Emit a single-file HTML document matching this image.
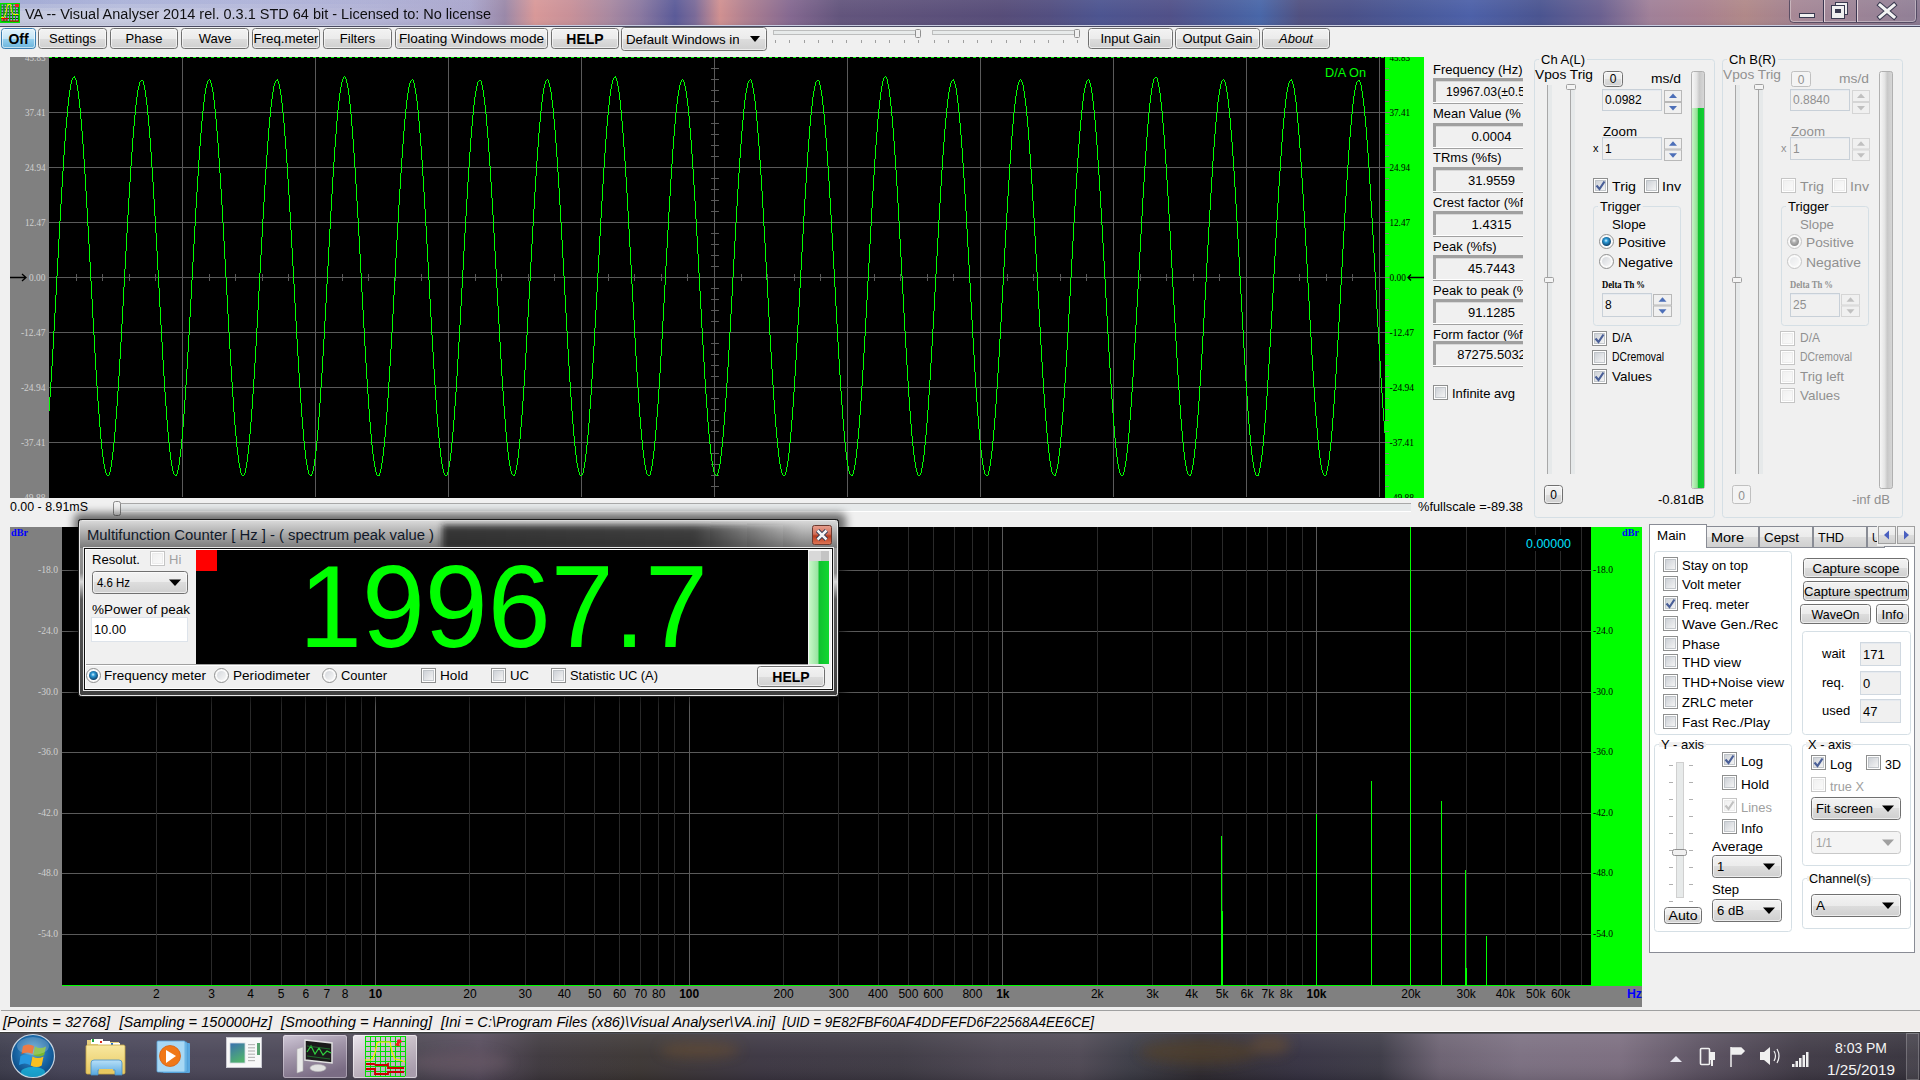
<!DOCTYPE html>
<html><head><meta charset="utf-8"><title>Visual Analyser</title>
<style>html,body{margin:0;padding:0;width:1920px;height:1080px;overflow:hidden;background:#f0f0f0;font-family:"Liberation Sans",sans-serif;}svg{display:block;}</style>
</head><body><svg width="1920" height="1080" viewBox="0 0 1920 1080" font-family="Liberation Sans, sans-serif"><defs>
<linearGradient id="gBtn" x1="0" y1="0" x2="0" y2="1">
 <stop offset="0" stop-color="#f3f3f3"/><stop offset="0.5" stop-color="#ebebeb"/>
 <stop offset="0.5" stop-color="#dddddd"/><stop offset="1" stop-color="#cfcfcf"/>
</linearGradient>
<linearGradient id="gBtnBlue" x1="0" y1="0" x2="0" y2="1">
 <stop offset="0" stop-color="#e5f4fc"/><stop offset="0.5" stop-color="#c4e5f6"/>
 <stop offset="0.5" stop-color="#98d1ef"/><stop offset="1" stop-color="#68b3db"/>
</linearGradient>
<linearGradient id="gChk" x1="0" y1="0" x2="1" y2="1">
 <stop offset="0" stop-color="#cbcfd5"/><stop offset="1" stop-color="#f6f6f6"/>
</linearGradient>
<linearGradient id="gChkD" x1="0" y1="0" x2="1" y2="1">
 <stop offset="0" stop-color="#f0f0f0"/><stop offset="1" stop-color="#fafafa"/>
</linearGradient>
<radialGradient id="gRadOn" cx="0.45" cy="0.4" r="0.6">
 <stop offset="0" stop-color="#d6f3ff"/><stop offset="0.35" stop-color="#2d9ad6"/><stop offset="1" stop-color="#0b3d66"/>
</radialGradient>
<radialGradient id="gRadOnD" cx="0.45" cy="0.4" r="0.6">
 <stop offset="0" stop-color="#f4f4f4"/><stop offset="0.4" stop-color="#b0b0b0"/><stop offset="1" stop-color="#8a8a8a"/>
</radialGradient>
<linearGradient id="gRad" x1="0" y1="0" x2="1" y2="1">
 <stop offset="0" stop-color="#cbcfd5"/><stop offset="1" stop-color="#f6f6f6"/>
</linearGradient>
<linearGradient id="gTrack" x1="0" y1="0" x2="1" y2="0">
 <stop offset="0" stop-color="#b9b9b9"/><stop offset="0.3" stop-color="#e7eaea"/><stop offset="1" stop-color="#e7eaea"/>
</linearGradient>

<linearGradient id="gTitle" x1="0" y1="0" x2="1920" y2="0" gradientUnits="userSpaceOnUse"><stop offset="0.0000" stop-color="#c4c8de"/><stop offset="0.0625" stop-color="#c8cce2"/><stop offset="0.1302" stop-color="#c0c2de"/><stop offset="0.1979" stop-color="#b4b4d6"/><stop offset="0.2448" stop-color="#aaa6cc"/><stop offset="0.2630" stop-color="#9a88a8"/><stop offset="0.2786" stop-color="#d89898"/><stop offset="0.2969" stop-color="#c89098"/><stop offset="0.3177" stop-color="#a888a0"/><stop offset="0.3333" stop-color="#8a78a0"/><stop offset="0.3516" stop-color="#5a5a98"/><stop offset="0.3620" stop-color="#7a6a98"/><stop offset="0.3750" stop-color="#d09090"/><stop offset="0.3880" stop-color="#b08090"/><stop offset="0.4115" stop-color="#846890"/><stop offset="0.4375" stop-color="#62547c"/><stop offset="0.5208" stop-color="#564c78"/><stop offset="0.5469" stop-color="#524e80"/><stop offset="0.5729" stop-color="#4c5490"/><stop offset="0.6094" stop-color="#505088"/><stop offset="0.6328" stop-color="#4a5a98"/><stop offset="0.6562" stop-color="#4866a8"/><stop offset="0.6771" stop-color="#505080"/><stop offset="0.7031" stop-color="#4a5088"/><stop offset="0.7344" stop-color="#485898"/><stop offset="0.7656" stop-color="#4c60a8"/><stop offset="0.8021" stop-color="#4a5490"/><stop offset="0.8333" stop-color="#6a6090"/><stop offset="0.8594" stop-color="#a08098"/><stop offset="0.8854" stop-color="#a88090"/><stop offset="0.9089" stop-color="#b08888"/><stop offset="0.9375" stop-color="#a08090"/><stop offset="1.0000" stop-color="#8a7890"/></linearGradient>
<linearGradient id="gTitleV" x1="0" y1="0" x2="0" y2="1">
 <stop offset="0" stop-color="#ffffff" stop-opacity="0.06"/><stop offset="0.6" stop-color="#ffffff" stop-opacity="0.0"/>
 <stop offset="1" stop-color="#000000" stop-opacity="0.08"/>
</linearGradient>
<linearGradient id="gTL" x1="0" y1="0" x2="1" y2="0"><stop offset="0" stop-color="#6070c0" stop-opacity="0.35"/><stop offset="0.6" stop-color="#6070c0" stop-opacity="0.15"/><stop offset="1" stop-color="#6070c0" stop-opacity="0"/></linearGradient><clipPath id="cCombo"><rect x="622" y="28" width="117" height="22"/></clipPath><linearGradient id="gMeterG" x1="0" y1="0" x2="1" y2="0"><stop offset="0" stop-color="#f8f8f8"/><stop offset="0.4" stop-color="#e4e4e4"/><stop offset="0.6" stop-color="#c8c8c8"/><stop offset="1" stop-color="#d8d8d8"/></linearGradient><linearGradient id="gMeter" x1="0" y1="0" x2="1" y2="0"><stop offset="0" stop-color="#c8f4c8"/><stop offset="0.45" stop-color="#90e090"/><stop offset="0.5" stop-color="#10c030"/><stop offset="1" stop-color="#10d030"/></linearGradient>
<linearGradient id="gDlgT" x1="0" y1="0" x2="0" y2="1">
 <stop offset="0" stop-color="#d8d8d8"/><stop offset="0.5" stop-color="#a8a8a8"/><stop offset="1" stop-color="#7a7a7a"/>
</linearGradient>
<linearGradient id="gDlgDark" x1="0" y1="0" x2="1" y2="0">
 <stop offset="0" stop-color="#000" stop-opacity="0"/><stop offset="0.47" stop-color="#000" stop-opacity="0"/>
 <stop offset="0.52" stop-color="#000" stop-opacity="0.75"/><stop offset="0.8" stop-color="#000" stop-opacity="0.6"/>
 <stop offset="0.92" stop-color="#000" stop-opacity="0.1"/><stop offset="1" stop-color="#000" stop-opacity="0"/>
</linearGradient>
<linearGradient id="gDlgSide" x1="0" y1="0" x2="0" y2="1">
 <stop offset="0" stop-color="#a0a0a0"/><stop offset="0.3" stop-color="#8a8a8a"/><stop offset="0.35" stop-color="#d8d8d8"/><stop offset="0.45" stop-color="#5a5a5a"/><stop offset="1" stop-color="#404040"/>
</linearGradient>
<linearGradient id="gDlgDark2" x1="0" y1="0" x2="1" y2="0"><stop offset="0" stop-color="#202020" stop-opacity="0.85"/><stop offset="0.7" stop-color="#202020" stop-opacity="0.8"/><stop offset="1" stop-color="#202020" stop-opacity="0"/></linearGradient>
<filter id="fShadow" x="-0.05" y="-0.2" width="1.1" height="1.4"><feGaussianBlur stdDeviation="4"/></filter>
<filter id="fBlur" x="-0.1" y="-0.5" width="1.2" height="2"><feGaussianBlur stdDeviation="3"/></filter>
<linearGradient id="gClose" x1="0" y1="0" x2="0" y2="1"><stop offset="0" stop-color="#e8a090"/><stop offset="0.45" stop-color="#d0705a"/><stop offset="0.55" stop-color="#b83a1c"/><stop offset="1" stop-color="#e07858"/></linearGradient><linearGradient id="gLvl" x1="0" y1="0" x2="1" y2="0"><stop offset="0" stop-color="#c8f8c8"/><stop offset="0.45" stop-color="#98e4a0"/><stop offset="0.5" stop-color="#10c030"/><stop offset="1" stop-color="#10d830"/></linearGradient><linearGradient id="gTab" x1="0" y1="0" x2="0" y2="1"><stop offset="0" stop-color="#f2f2f2"/><stop offset="0.5" stop-color="#ebebeb"/><stop offset="0.5" stop-color="#dddddd"/><stop offset="1" stop-color="#cfcfcf"/></linearGradient>
<linearGradient id="gTask" x1="0" y1="0" x2="1920" y2="0" gradientUnits="userSpaceOnUse"><stop offset="0.0000" stop-color="#3a3a4a"/><stop offset="0.0312" stop-color="#444256"/><stop offset="0.1042" stop-color="#4a4658"/><stop offset="0.1458" stop-color="#4a4656"/><stop offset="0.2188" stop-color="#4a4450"/><stop offset="0.2500" stop-color="#54495a"/><stop offset="0.2812" stop-color="#3c363c"/><stop offset="0.3333" stop-color="#3a3432"/><stop offset="0.3958" stop-color="#3a3440"/><stop offset="0.4688" stop-color="#3c3842"/><stop offset="0.5208" stop-color="#4a4450"/><stop offset="0.5625" stop-color="#4c4652"/><stop offset="0.5885" stop-color="#3a3a44"/><stop offset="0.6250" stop-color="#2e2a30"/><stop offset="0.6771" stop-color="#343040"/><stop offset="0.7188" stop-color="#3a3844"/><stop offset="0.7500" stop-color="#6a6070"/><stop offset="0.7917" stop-color="#7a6e80"/><stop offset="0.8438" stop-color="#7a6c7e"/><stop offset="0.8854" stop-color="#5a5060"/><stop offset="0.9375" stop-color="#3e3844"/><stop offset="1.0000" stop-color="#34303a"/></linearGradient>
<linearGradient id="gTaskV" x1="0" y1="0" x2="0" y2="1">
 <stop offset="0" stop-color="#ffffff" stop-opacity="0.10"/><stop offset="0.5" stop-color="#ffffff" stop-opacity="0.03"/><stop offset="1" stop-color="#000" stop-opacity="0.1"/>
</linearGradient>
<clipPath id="cTask"><rect x="0" y="1034" width="1920" height="46"/></clipPath>
<filter id="fBlur2" x="-0.5" y="-1" width="2" height="3"><feGaussianBlur stdDeviation="6"/></filter>
<radialGradient id="gOrb" cx="0.5" cy="0.4" r="0.6">
 <stop offset="0" stop-color="#60a8d0"/><stop offset="0.6" stop-color="#1a68a8"/><stop offset="1" stop-color="#0a4880"/>
</radialGradient>
<linearGradient id="gTBtn" x1="0" y1="0" x2="0" y2="1">
 <stop offset="0" stop-color="#ffffff" stop-opacity="0.35"/><stop offset="1" stop-color="#ffffff" stop-opacity="0.15"/>
</linearGradient>
<linearGradient id="gFold" x1="0" y1="0" x2="0" y2="1"><stop offset="0" stop-color="#f8e8a0"/><stop offset="1" stop-color="#e8c860"/></linearGradient><linearGradient id="gFoldB" x1="0" y1="0" x2="0" y2="1"><stop offset="0" stop-color="#b8e0f8"/><stop offset="1" stop-color="#58a8e0"/></linearGradient><linearGradient id="gWin" x1="0" y1="0" x2="0.4" y2="1"><stop offset="0" stop-color="#3a70b0"/><stop offset="1" stop-color="#50b070"/></linearGradient><linearGradient id="gTB1" x1="0" y1="0" x2="0.4" y2="1"><stop offset="0" stop-color="#d0c8d8"/><stop offset="0.5" stop-color="#a094a8"/><stop offset="1" stop-color="#7a6c84"/></linearGradient><linearGradient id="gTB2" x1="0" y1="0" x2="0.6" y2="1"><stop offset="0" stop-color="#ece6ee"/><stop offset="0.5" stop-color="#c8bec8"/><stop offset="1" stop-color="#a89cac"/></linearGradient></defs><rect x="0" y="0" width="1920" height="1080" fill="#f0f0f0" />
<rect x="10" y="57" width="39" height="441" fill="#808080" />
<rect x="49" y="57" width="1336" height="441" fill="#000000" />
<rect x="1385" y="57" width="39" height="441" fill="#00ff00" />
<rect x="182" y="57" width="1" height="440" fill="#5a5a5a"/>
<rect x="315" y="57" width="1" height="440" fill="#5a5a5a"/>
<rect x="448" y="57" width="1" height="440" fill="#5a5a5a"/>
<rect x="581" y="57" width="1" height="440" fill="#5a5a5a"/>
<rect x="714" y="57" width="1" height="440" fill="#5a5a5a"/>
<rect x="847" y="57" width="1" height="440" fill="#5a5a5a"/>
<rect x="980" y="57" width="1" height="440" fill="#5a5a5a"/>
<rect x="1113" y="57" width="1" height="440" fill="#5a5a5a"/>
<rect x="1246" y="57" width="1" height="440" fill="#5a5a5a"/>
<rect x="1379" y="57" width="1" height="440" fill="#5a5a5a"/>
<rect x="49" y="112" width="1336" height="1" fill="#5a5a5a"/>
<rect x="49" y="167" width="1336" height="1" fill="#5a5a5a"/>
<rect x="49" y="222" width="1336" height="1" fill="#5a5a5a"/>
<rect x="49" y="277" width="1336" height="1" fill="#5a5a5a"/>
<rect x="49" y="332" width="1336" height="1" fill="#5a5a5a"/>
<rect x="49" y="387" width="1336" height="1" fill="#5a5a5a"/>
<rect x="49" y="442" width="1336" height="1" fill="#5a5a5a"/>
<rect x="711" y="68" width="8" height="1" fill="#5a5a5a"/>
<rect x="711" y="79" width="8" height="1" fill="#5a5a5a"/>
<rect x="711" y="90" width="8" height="1" fill="#5a5a5a"/>
<rect x="711" y="101" width="8" height="1" fill="#5a5a5a"/>
<rect x="711" y="123" width="8" height="1" fill="#5a5a5a"/>
<rect x="711" y="134" width="8" height="1" fill="#5a5a5a"/>
<rect x="711" y="145" width="8" height="1" fill="#5a5a5a"/>
<rect x="711" y="156" width="8" height="1" fill="#5a5a5a"/>
<rect x="711" y="178" width="8" height="1" fill="#5a5a5a"/>
<rect x="711" y="189" width="8" height="1" fill="#5a5a5a"/>
<rect x="711" y="200" width="8" height="1" fill="#5a5a5a"/>
<rect x="711" y="211" width="8" height="1" fill="#5a5a5a"/>
<rect x="711" y="233" width="8" height="1" fill="#5a5a5a"/>
<rect x="711" y="244" width="8" height="1" fill="#5a5a5a"/>
<rect x="711" y="255" width="8" height="1" fill="#5a5a5a"/>
<rect x="711" y="266" width="8" height="1" fill="#5a5a5a"/>
<rect x="711" y="288" width="8" height="1" fill="#5a5a5a"/>
<rect x="711" y="299" width="8" height="1" fill="#5a5a5a"/>
<rect x="711" y="310" width="8" height="1" fill="#5a5a5a"/>
<rect x="711" y="321" width="8" height="1" fill="#5a5a5a"/>
<rect x="711" y="343" width="8" height="1" fill="#5a5a5a"/>
<rect x="711" y="354" width="8" height="1" fill="#5a5a5a"/>
<rect x="711" y="365" width="8" height="1" fill="#5a5a5a"/>
<rect x="711" y="376" width="8" height="1" fill="#5a5a5a"/>
<rect x="711" y="398" width="8" height="1" fill="#5a5a5a"/>
<rect x="711" y="409" width="8" height="1" fill="#5a5a5a"/>
<rect x="711" y="420" width="8" height="1" fill="#5a5a5a"/>
<rect x="711" y="431" width="8" height="1" fill="#5a5a5a"/>
<rect x="711" y="453" width="8" height="1" fill="#5a5a5a"/>
<rect x="711" y="464" width="8" height="1" fill="#5a5a5a"/>
<rect x="711" y="475" width="8" height="1" fill="#5a5a5a"/>
<rect x="711" y="486" width="8" height="1" fill="#5a5a5a"/>
<rect x="76" y="274" width="1" height="7" fill="#5a5a5a"/>
<rect x="102" y="274" width="1" height="7" fill="#5a5a5a"/>
<rect x="129" y="274" width="1" height="7" fill="#5a5a5a"/>
<rect x="155" y="274" width="1" height="7" fill="#5a5a5a"/>
<rect x="209" y="274" width="1" height="7" fill="#5a5a5a"/>
<rect x="235" y="274" width="1" height="7" fill="#5a5a5a"/>
<rect x="262" y="274" width="1" height="7" fill="#5a5a5a"/>
<rect x="288" y="274" width="1" height="7" fill="#5a5a5a"/>
<rect x="342" y="274" width="1" height="7" fill="#5a5a5a"/>
<rect x="368" y="274" width="1" height="7" fill="#5a5a5a"/>
<rect x="395" y="274" width="1" height="7" fill="#5a5a5a"/>
<rect x="421" y="274" width="1" height="7" fill="#5a5a5a"/>
<rect x="475" y="274" width="1" height="7" fill="#5a5a5a"/>
<rect x="501" y="274" width="1" height="7" fill="#5a5a5a"/>
<rect x="528" y="274" width="1" height="7" fill="#5a5a5a"/>
<rect x="554" y="274" width="1" height="7" fill="#5a5a5a"/>
<rect x="608" y="274" width="1" height="7" fill="#5a5a5a"/>
<rect x="634" y="274" width="1" height="7" fill="#5a5a5a"/>
<rect x="661" y="274" width="1" height="7" fill="#5a5a5a"/>
<rect x="687" y="274" width="1" height="7" fill="#5a5a5a"/>
<rect x="741" y="274" width="1" height="7" fill="#5a5a5a"/>
<rect x="767" y="274" width="1" height="7" fill="#5a5a5a"/>
<rect x="794" y="274" width="1" height="7" fill="#5a5a5a"/>
<rect x="820" y="274" width="1" height="7" fill="#5a5a5a"/>
<rect x="874" y="274" width="1" height="7" fill="#5a5a5a"/>
<rect x="900" y="274" width="1" height="7" fill="#5a5a5a"/>
<rect x="927" y="274" width="1" height="7" fill="#5a5a5a"/>
<rect x="953" y="274" width="1" height="7" fill="#5a5a5a"/>
<rect x="1007" y="274" width="1" height="7" fill="#5a5a5a"/>
<rect x="1033" y="274" width="1" height="7" fill="#5a5a5a"/>
<rect x="1060" y="274" width="1" height="7" fill="#5a5a5a"/>
<rect x="1086" y="274" width="1" height="7" fill="#5a5a5a"/>
<rect x="1140" y="274" width="1" height="7" fill="#5a5a5a"/>
<rect x="1166" y="274" width="1" height="7" fill="#5a5a5a"/>
<rect x="1193" y="274" width="1" height="7" fill="#5a5a5a"/>
<rect x="1219" y="274" width="1" height="7" fill="#5a5a5a"/>
<rect x="1273" y="274" width="1" height="7" fill="#5a5a5a"/>
<rect x="1299" y="274" width="1" height="7" fill="#5a5a5a"/>
<rect x="1326" y="274" width="1" height="7" fill="#5a5a5a"/>
<rect x="1352" y="274" width="1" height="7" fill="#5a5a5a"/>
<rect x="1385" y="68" width="4" height="1" fill="#808080"/>
<rect x="1385" y="79" width="4" height="1" fill="#808080"/>
<rect x="1385" y="90" width="4" height="1" fill="#808080"/>
<rect x="1385" y="101" width="4" height="1" fill="#808080"/>
<rect x="1385" y="112" width="5" height="1" fill="#808080"/>
<rect x="1385" y="123" width="4" height="1" fill="#808080"/>
<rect x="1385" y="134" width="4" height="1" fill="#808080"/>
<rect x="1385" y="145" width="4" height="1" fill="#808080"/>
<rect x="1385" y="156" width="4" height="1" fill="#808080"/>
<rect x="1385" y="167" width="5" height="1" fill="#808080"/>
<rect x="1385" y="178" width="4" height="1" fill="#808080"/>
<rect x="1385" y="189" width="4" height="1" fill="#808080"/>
<rect x="1385" y="200" width="4" height="1" fill="#808080"/>
<rect x="1385" y="211" width="4" height="1" fill="#808080"/>
<rect x="1385" y="222" width="5" height="1" fill="#808080"/>
<rect x="1385" y="233" width="4" height="1" fill="#808080"/>
<rect x="1385" y="244" width="4" height="1" fill="#808080"/>
<rect x="1385" y="255" width="4" height="1" fill="#808080"/>
<rect x="1385" y="266" width="4" height="1" fill="#808080"/>
<rect x="1385" y="277" width="5" height="1" fill="#808080"/>
<rect x="1385" y="288" width="4" height="1" fill="#808080"/>
<rect x="1385" y="299" width="4" height="1" fill="#808080"/>
<rect x="1385" y="310" width="4" height="1" fill="#808080"/>
<rect x="1385" y="321" width="4" height="1" fill="#808080"/>
<rect x="1385" y="332" width="5" height="1" fill="#808080"/>
<rect x="1385" y="343" width="4" height="1" fill="#808080"/>
<rect x="1385" y="354" width="4" height="1" fill="#808080"/>
<rect x="1385" y="365" width="4" height="1" fill="#808080"/>
<rect x="1385" y="376" width="4" height="1" fill="#808080"/>
<rect x="1385" y="387" width="5" height="1" fill="#808080"/>
<rect x="1385" y="398" width="4" height="1" fill="#808080"/>
<rect x="1385" y="409" width="4" height="1" fill="#808080"/>
<rect x="1385" y="420" width="4" height="1" fill="#808080"/>
<rect x="1385" y="431" width="4" height="1" fill="#808080"/>
<rect x="1385" y="442" width="5" height="1" fill="#808080"/>
<rect x="1385" y="453" width="4" height="1" fill="#808080"/>
<rect x="1385" y="464" width="4" height="1" fill="#808080"/>
<rect x="1385" y="475" width="4" height="1" fill="#808080"/>
<rect x="1385" y="486" width="4" height="1" fill="#808080"/>
<line x1="49" y1="57.5" x2="1385" y2="57.5" stroke="#00ff00" stroke-width="1" stroke-dasharray="3,3"/>
<path fill="#00ff00" d="M49,397h1v14h-1zM50,382h1v15h-1zM51,366h1v16h-1zM52,349h1v17h-1zM53,331h1v18h-1zM54,313h1v18h-1zM55,295h1v18h-1zM56,276h1v19h-1zM57,258h1v18h-1zM58,239h1v19h-1zM59,221h1v18h-1zM60,204h1v17h-1zM61,187h1v17h-1zM62,171h1v16h-1zM63,155h1v16h-1zM64,141h1v14h-1zM65,128h1v13h-1zM66,117h1v11h-1zM67,106h1v11h-1zM68,97h1v9h-1zM69,90h1v7h-1zM70,84h1v6h-1zM71,80h1v4h-1zM72,78h1v2h-1zM73,77h1v1h-1zM74,76h1v2h-1zM75,78h1v2h-1zM76,80h1v5h-1zM77,85h1v6h-1zM78,91h1v8h-1zM79,99h1v9h-1zM80,108h1v11h-1zM81,119h1v12h-1zM82,131h1v13h-1zM83,144h1v15h-1zM84,159h1v15h-1zM85,174h1v17h-1zM86,191h1v17h-1zM87,208h1v18h-1zM88,226h1v18h-1zM89,244h1v18h-1zM90,262h1v19h-1zM91,281h1v18h-1zM92,299h1v19h-1zM93,318h1v17h-1zM94,335h1v18h-1zM95,353h1v17h-1zM96,370h1v16h-1zM97,386h1v15h-1zM98,401h1v13h-1zM99,414h1v13h-1zM100,427h1v12h-1zM101,439h1v10h-1zM102,449h1v8h-1zM103,457h1v7h-1zM104,464h1v5h-1zM105,469h1v4h-1zM106,473h1v2h-1zM107,475h1v1h-1zM108,475h1v1h-1zM109,472h1v3h-1zM110,467h1v5h-1zM111,460h1v7h-1zM112,452h1v8h-1zM113,443h1v9h-1zM114,432h1v11h-1zM115,419h1v13h-1zM116,406h1v13h-1zM117,391h1v15h-1zM118,376h1v15h-1zM119,359h1v17h-1zM120,342h1v17h-1zM121,324h1v18h-1zM122,306h1v18h-1zM123,287h1v19h-1zM124,269h1v18h-1zM125,251h1v18h-1zM126,233h1v18h-1zM127,215h1v18h-1zM128,198h1v17h-1zM129,182h1v16h-1zM130,166h1v16h-1zM131,152h1v14h-1zM132,138h1v14h-1zM133,126h1v12h-1zM134,115h1v11h-1zM135,105h1v10h-1zM136,97h1v8h-1zM137,90h1v7h-1zM138,86h1v4h-1zM139,82h1v4h-1zM140,81h1v1h-1zM141,80h1v1h-1zM142,80h1v1h-1zM143,81h1v4h-1zM144,85h1v5h-1zM145,90h1v7h-1zM146,97h1v8h-1zM147,105h1v10h-1zM148,115h1v11h-1zM149,126h1v12h-1zM150,138h1v14h-1zM151,152h1v15h-1zM152,167h1v15h-1zM153,182h1v17h-1zM154,199h1v17h-1zM155,216h1v17h-1zM156,233h1v18h-1zM157,251h1v19h-1zM158,270h1v18h-1zM159,288h1v19h-1zM160,307h1v18h-1zM161,325h1v17h-1zM162,342h1v18h-1zM163,360h1v16h-1zM164,376h1v16h-1zM165,392h1v14h-1zM166,406h1v14h-1zM167,420h1v12h-1zM168,432h1v11h-1zM169,443h1v9h-1zM170,452h1v8h-1zM171,460h1v6h-1zM172,466h1v5h-1zM173,471h1v3h-1zM174,474h1v1h-1zM175,475h1v1h-1zM176,474h1v2h-1zM177,470h1v4h-1zM178,465h1v5h-1zM179,457h1v8h-1zM180,449h1v8h-1zM181,439h1v10h-1zM182,427h1v12h-1zM183,414h1v13h-1zM184,400h1v14h-1zM185,385h1v15h-1zM186,369h1v16h-1zM187,352h1v17h-1zM188,335h1v17h-1zM189,317h1v18h-1zM190,299h1v18h-1zM191,280h1v19h-1zM192,262h1v18h-1zM193,244h1v18h-1zM194,226h1v18h-1zM195,208h1v18h-1zM196,192h1v16h-1zM197,176h1v16h-1zM198,160h1v16h-1zM199,146h1v14h-1zM200,133h1v13h-1zM201,121h1v12h-1zM202,111h1v10h-1zM203,102h1v9h-1zM204,94h1v8h-1zM205,88h1v6h-1zM206,84h1v4h-1zM207,81h1v3h-1zM208,80h1v1h-1zM209,79h1v1h-1zM210,80h1v3h-1zM211,83h1v4h-1zM212,87h1v5h-1zM213,92h1v8h-1zM214,100h1v9h-1zM215,109h1v10h-1zM216,119h1v12h-1zM217,131h1v12h-1zM218,143h1v15h-1zM219,158h1v15h-1zM220,173h1v16h-1zM221,189h1v16h-1zM222,205h1v18h-1zM223,223h1v18h-1zM224,241h1v18h-1zM225,259h1v18h-1zM226,277h1v18h-1zM227,295h1v19h-1zM228,314h1v18h-1zM229,332h1v17h-1zM230,349h1v17h-1zM231,366h1v16h-1zM232,382h1v15h-1zM233,397h1v15h-1zM234,412h1v13h-1zM235,425h1v11h-1zM236,436h1v11h-1zM237,447h1v8h-1zM238,455h1v8h-1zM239,463h1v5h-1zM240,468h1v5h-1zM241,473h1v2h-1zM242,475h1v1h-1zM243,475h1v1h-1zM244,473h1v2h-1zM245,468h1v5h-1zM246,462h1v6h-1zM247,454h1v8h-1zM248,445h1v9h-1zM249,434h1v11h-1zM250,422h1v12h-1zM251,409h1v13h-1zM252,394h1v15h-1zM253,379h1v15h-1zM254,363h1v16h-1zM255,346h1v17h-1zM256,328h1v18h-1zM257,310h1v18h-1zM258,291h1v19h-1zM259,273h1v18h-1zM260,255h1v18h-1zM261,237h1v18h-1zM262,219h1v18h-1zM263,202h1v17h-1zM264,185h1v17h-1zM265,169h1v16h-1zM266,155h1v14h-1zM267,141h1v14h-1zM268,128h1v13h-1zM269,117h1v11h-1zM270,107h1v10h-1zM271,99h1v8h-1zM272,92h1v7h-1zM273,86h1v6h-1zM274,83h1v3h-1zM275,81h1v2h-1zM276,80h1v1h-1zM277,79h1v2h-1zM278,81h1v3h-1zM279,84h1v5h-1zM280,89h1v6h-1zM281,95h1v8h-1zM282,103h1v10h-1zM283,113h1v10h-1zM284,123h1v13h-1zM285,136h1v13h-1zM286,149h1v14h-1zM287,163h1v16h-1zM288,179h1v16h-1zM289,195h1v17h-1zM290,212h1v18h-1zM291,230h1v18h-1zM292,248h1v18h-1zM293,266h1v18h-1zM294,284h1v19h-1zM295,303h1v18h-1zM296,321h1v18h-1zM297,339h1v17h-1zM298,356h1v17h-1zM299,373h1v15h-1zM300,388h1v15h-1zM301,403h1v14h-1zM302,417h1v12h-1zM303,429h1v12h-1zM304,441h1v9h-1zM305,450h1v9h-1zM306,459h1v6h-1zM307,465h1v5h-1zM308,470h1v4h-1zM309,474h1v1h-1zM310,475h1v1h-1zM311,474h1v2h-1zM312,471h1v3h-1zM313,466h1v5h-1zM314,459h1v7h-1zM315,451h1v8h-1zM316,441h1v10h-1zM317,430h1v11h-1zM318,417h1v13h-1zM319,403h1v14h-1zM320,388h1v15h-1zM321,373h1v15h-1zM322,356h1v17h-1zM323,339h1v17h-1zM324,321h1v18h-1zM325,303h1v18h-1zM326,284h1v19h-1zM327,266h1v18h-1zM328,247h1v19h-1zM329,229h1v18h-1zM330,211h1v18h-1zM331,194h1v17h-1zM332,177h1v17h-1zM333,162h1v15h-1zM334,147h1v15h-1zM335,134h1v13h-1zM336,121h1v13h-1zM337,110h1v11h-1zM338,101h1v9h-1zM339,93h1v8h-1zM340,87h1v6h-1zM341,82h1v5h-1zM342,79h1v3h-1zM343,77h1v2h-1zM344,76h1v1h-1zM345,77h1v2h-1zM346,79h1v4h-1zM347,83h1v5h-1zM348,88h1v7h-1zM349,95h1v9h-1zM350,104h1v10h-1zM351,114h1v12h-1zM352,126h1v13h-1zM353,139h1v14h-1zM354,153h1v15h-1zM355,168h1v16h-1zM356,184h1v17h-1zM357,201h1v17h-1zM358,218h1v18h-1zM359,236h1v18h-1zM360,254h1v19h-1zM361,273h1v19h-1zM362,292h1v18h-1zM363,310h1v18h-1zM364,328h1v18h-1zM365,346h1v17h-1zM366,363h1v16h-1zM367,379h1v15h-1zM368,394h1v15h-1zM369,409h1v13h-1zM370,422h1v12h-1zM371,434h1v11h-1zM372,445h1v9h-1zM373,454h1v7h-1zM374,461h1v6h-1zM375,467h1v5h-1zM376,472h1v3h-1zM377,475h1v1h-1zM378,475h1v1h-1zM379,473h1v3h-1zM380,469h1v4h-1zM381,463h1v6h-1zM382,456h1v7h-1zM383,447h1v9h-1zM384,437h1v10h-1zM385,425h1v12h-1zM386,412h1v13h-1zM387,398h1v14h-1zM388,382h1v16h-1zM389,366h1v16h-1zM390,349h1v17h-1zM391,332h1v17h-1zM392,314h1v18h-1zM393,295h1v19h-1zM394,277h1v18h-1zM395,258h1v19h-1zM396,240h1v18h-1zM397,223h1v17h-1zM398,205h1v18h-1zM399,189h1v16h-1zM400,173h1v16h-1zM401,158h1v15h-1zM402,144h1v14h-1zM403,131h1v13h-1zM404,119h1v12h-1zM405,109h1v10h-1zM406,100h1v9h-1zM407,93h1v7h-1zM408,87h1v6h-1zM409,83h1v4h-1zM410,81h1v2h-1zM411,80h1v1h-1zM412,79h1v1h-1zM413,80h1v3h-1zM414,83h1v5h-1zM415,88h1v6h-1zM416,94h1v7h-1zM417,101h1v9h-1zM418,110h1v11h-1zM419,121h1v12h-1zM420,133h1v13h-1zM421,146h1v14h-1zM422,160h1v16h-1zM423,176h1v16h-1zM424,192h1v17h-1zM425,209h1v17h-1zM426,226h1v18h-1zM427,244h1v18h-1zM428,262h1v18h-1zM429,280h1v19h-1zM430,299h1v18h-1zM431,317h1v18h-1zM432,335h1v17h-1zM433,352h1v17h-1zM434,369h1v16h-1zM435,385h1v15h-1zM436,400h1v14h-1zM437,414h1v13h-1zM438,427h1v11h-1zM439,438h1v10h-1zM440,448h1v9h-1zM441,457h1v7h-1zM442,464h1v5h-1zM443,469h1v4h-1zM444,473h1v2h-1zM445,475h1v1h-1zM446,475h1v1h-1zM447,472h1v3h-1zM448,467h1v5h-1zM449,461h1v6h-1zM450,453h1v8h-1zM451,443h1v10h-1zM452,432h1v11h-1zM453,420h1v12h-1zM454,406h1v14h-1zM455,392h1v14h-1zM456,376h1v16h-1zM457,359h1v17h-1zM458,342h1v17h-1zM459,325h1v17h-1zM460,306h1v19h-1zM461,288h1v18h-1zM462,270h1v18h-1zM463,251h1v19h-1zM464,233h1v18h-1zM465,216h1v17h-1zM466,199h1v17h-1zM467,182h1v17h-1zM468,167h1v15h-1zM469,152h1v15h-1zM470,138h1v14h-1zM471,126h1v12h-1zM472,115h1v11h-1zM473,105h1v10h-1zM474,97h1v8h-1zM475,91h1v6h-1zM476,86h1v5h-1zM477,82h1v4h-1zM478,81h1v1h-1zM479,80h1v1h-1zM480,80h1v1h-1zM481,81h1v4h-1zM482,85h1v5h-1zM483,90h1v7h-1zM484,97h1v8h-1zM485,105h1v9h-1zM486,114h1v12h-1zM487,126h1v12h-1zM488,138h1v14h-1zM489,152h1v14h-1zM490,166h1v16h-1zM491,182h1v16h-1zM492,198h1v17h-1zM493,215h1v18h-1zM494,233h1v18h-1zM495,251h1v18h-1zM496,269h1v19h-1zM497,288h1v18h-1zM498,306h1v18h-1zM499,324h1v18h-1zM500,342h1v17h-1zM501,359h1v17h-1zM502,376h1v15h-1zM503,391h1v15h-1zM504,406h1v13h-1zM505,419h1v13h-1zM506,432h1v10h-1zM507,442h1v10h-1zM508,452h1v8h-1zM509,460h1v6h-1zM510,466h1v5h-1zM511,471h1v3h-1zM512,474h1v1h-1zM513,475h1v1h-1zM514,474h1v2h-1zM515,470h1v4h-1zM516,465h1v5h-1zM517,458h1v7h-1zM518,449h1v9h-1zM519,439h1v10h-1zM520,427h1v12h-1zM521,415h1v12h-1zM522,401h1v14h-1zM523,386h1v15h-1zM524,370h1v16h-1zM525,353h1v17h-1zM526,335h1v18h-1zM527,317h1v18h-1zM528,299h1v18h-1zM529,281h1v18h-1zM530,262h1v19h-1zM531,244h1v18h-1zM532,226h1v18h-1zM533,209h1v17h-1zM534,192h1v17h-1zM535,176h1v16h-1zM536,161h1v15h-1zM537,147h1v14h-1zM538,133h1v14h-1zM539,122h1v11h-1zM540,111h1v11h-1zM541,102h1v9h-1zM542,94h1v8h-1zM543,88h1v6h-1zM544,84h1v4h-1zM545,81h1v3h-1zM546,80h1v1h-1zM547,79h1v1h-1zM548,80h1v3h-1zM549,83h1v4h-1zM550,87h1v5h-1zM551,92h1v8h-1zM552,100h1v8h-1zM553,108h1v11h-1zM554,119h1v11h-1zM555,130h1v13h-1zM556,143h1v14h-1zM557,157h1v15h-1zM558,172h1v16h-1zM559,188h1v17h-1zM560,205h1v17h-1zM561,222h1v18h-1zM562,240h1v18h-1zM563,258h1v18h-1zM564,276h1v19h-1zM565,295h1v18h-1zM566,313h1v18h-1zM567,331h1v18h-1zM568,349h1v17h-1zM569,366h1v16h-1zM570,382h1v15h-1zM571,397h1v14h-1zM572,411h1v13h-1zM573,424h1v12h-1zM574,436h1v10h-1zM575,446h1v9h-1zM576,455h1v8h-1zM577,463h1v5h-1zM578,468h1v4h-1zM579,472h1v3h-1zM580,475h1v1h-1zM581,475h1v1h-1zM582,473h1v2h-1zM583,468h1v5h-1zM584,462h1v6h-1zM585,454h1v8h-1zM586,445h1v9h-1zM587,435h1v10h-1zM588,423h1v12h-1zM589,409h1v14h-1zM590,395h1v14h-1zM591,379h1v16h-1zM592,363h1v16h-1zM593,346h1v17h-1zM594,328h1v18h-1zM595,310h1v18h-1zM596,292h1v18h-1zM597,273h1v19h-1zM598,255h1v18h-1zM599,236h1v19h-1zM600,218h1v18h-1zM601,201h1v17h-1zM602,184h1v17h-1zM603,168h1v16h-1zM604,153h1v15h-1zM605,139h1v14h-1zM606,126h1v13h-1zM607,115h1v11h-1zM608,105h1v10h-1zM609,96h1v9h-1zM610,89h1v7h-1zM611,84h1v5h-1zM612,80h1v4h-1zM613,78h1v2h-1zM614,77h1v1h-1zM615,76h1v2h-1zM616,78h1v3h-1zM617,81h1v5h-1zM618,86h1v6h-1zM619,92h1v8h-1zM620,100h1v10h-1zM621,110h1v11h-1zM622,121h1v12h-1zM623,133h1v14h-1zM624,147h1v14h-1zM625,161h1v16h-1zM626,177h1v16h-1zM627,193h1v18h-1zM628,211h1v18h-1zM629,229h1v18h-1zM630,247h1v18h-1zM631,265h1v19h-1zM632,284h1v18h-1zM633,302h1v18h-1zM634,320h1v18h-1zM635,338h1v18h-1zM636,356h1v16h-1zM637,372h1v16h-1zM638,388h1v15h-1zM639,403h1v14h-1zM640,417h1v12h-1zM641,429h1v11h-1zM642,440h1v10h-1zM643,450h1v8h-1zM644,458h1v7h-1zM645,465h1v5h-1zM646,470h1v4h-1zM647,474h1v1h-1zM648,475h1v1h-1zM649,475h1v1h-1zM650,471h1v4h-1zM651,466h1v5h-1zM652,459h1v7h-1zM653,451h1v8h-1zM654,441h1v10h-1zM655,430h1v11h-1zM656,417h1v13h-1zM657,404h1v13h-1zM658,389h1v15h-1zM659,373h1v16h-1zM660,356h1v17h-1zM661,339h1v17h-1zM662,321h1v18h-1zM663,303h1v18h-1zM664,285h1v18h-1zM665,266h1v19h-1zM666,248h1v18h-1zM667,230h1v18h-1zM668,212h1v18h-1zM669,196h1v16h-1zM670,179h1v17h-1zM671,164h1v15h-1zM672,149h1v15h-1zM673,136h1v13h-1zM674,124h1v12h-1zM675,113h1v11h-1zM676,104h1v9h-1zM677,96h1v8h-1zM678,90h1v6h-1zM679,85h1v5h-1zM680,82h1v3h-1zM681,80h1v2h-1zM682,79h1v1h-1zM683,80h1v2h-1zM684,82h1v4h-1zM685,86h1v5h-1zM686,91h1v7h-1zM687,98h1v8h-1zM688,106h1v10h-1zM689,116h1v12h-1zM690,128h1v12h-1zM691,140h1v14h-1zM692,154h1v15h-1zM693,169h1v16h-1zM694,185h1v16h-1zM695,201h1v18h-1zM696,219h1v17h-1zM697,236h1v18h-1zM698,254h1v19h-1zM699,273h1v18h-1zM700,291h1v18h-1zM701,309h1v19h-1zM702,328h1v17h-1zM703,345h1v17h-1zM704,362h1v17h-1zM705,379h1v15h-1zM706,394h1v14h-1zM707,408h1v14h-1zM708,422h1v12h-1zM709,434h1v10h-1zM710,444h1v10h-1zM711,454h1v7h-1zM712,461h1v6h-1zM713,467h1v5h-1zM714,472h1v2h-1zM715,474h1v1h-1zM716,475h1v1h-1zM717,473h1v3h-1zM718,469h1v4h-1zM719,464h1v5h-1zM720,456h1v8h-1zM721,447h1v9h-1zM722,437h1v10h-1zM723,425h1v12h-1zM724,412h1v13h-1zM725,398h1v14h-1zM726,383h1v15h-1zM727,367h1v16h-1zM728,350h1v17h-1zM729,332h1v18h-1zM730,314h1v18h-1zM731,296h1v18h-1zM732,277h1v19h-1zM733,259h1v18h-1zM734,241h1v18h-1zM735,223h1v18h-1zM736,206h1v17h-1zM737,189h1v17h-1zM738,173h1v16h-1zM739,158h1v15h-1zM740,144h1v14h-1zM741,131h1v13h-1zM742,120h1v11h-1zM743,109h1v11h-1zM744,100h1v9h-1zM745,93h1v7h-1zM746,88h1v5h-1zM747,83h1v5h-1zM748,81h1v2h-1zM749,80h1v1h-1zM750,79h1v1h-1zM751,80h1v3h-1zM752,83h1v5h-1zM753,88h1v6h-1zM754,94h1v7h-1zM755,101h1v9h-1zM756,110h1v11h-1zM757,121h1v12h-1zM758,133h1v13h-1zM759,146h1v14h-1zM760,160h1v15h-1zM761,175h1v16h-1zM762,191h1v17h-1zM763,208h1v18h-1zM764,226h1v17h-1zM765,243h1v19h-1zM766,262h1v18h-1zM767,280h1v18h-1zM768,298h1v19h-1zM769,317h1v18h-1zM770,335h1v17h-1zM771,352h1v17h-1zM772,369h1v16h-1zM773,385h1v15h-1zM774,400h1v14h-1zM775,414h1v13h-1zM776,427h1v11h-1zM777,438h1v10h-1zM778,448h1v9h-1zM779,457h1v7h-1zM780,464h1v5h-1zM781,469h1v4h-1zM782,473h1v2h-1zM783,475h1v1h-1zM784,475h1v1h-1zM785,472h1v3h-1zM786,467h1v5h-1zM787,461h1v6h-1zM788,453h1v8h-1zM789,443h1v10h-1zM790,432h1v11h-1zM791,420h1v12h-1zM792,407h1v13h-1zM793,392h1v15h-1zM794,376h1v16h-1zM795,360h1v16h-1zM796,343h1v17h-1zM797,325h1v18h-1zM798,307h1v18h-1zM799,288h1v19h-1zM800,270h1v18h-1zM801,252h1v18h-1zM802,234h1v18h-1zM803,216h1v18h-1zM804,199h1v17h-1zM805,183h1v16h-1zM806,167h1v16h-1zM807,152h1v15h-1zM808,139h1v13h-1zM809,126h1v13h-1zM810,115h1v11h-1zM811,106h1v9h-1zM812,97h1v9h-1zM813,91h1v6h-1zM814,86h1v5h-1zM815,82h1v4h-1zM816,81h1v1h-1zM817,80h1v1h-1zM818,80h1v1h-1zM819,81h1v4h-1zM820,85h1v5h-1zM821,90h1v6h-1zM822,96h1v9h-1zM823,105h1v9h-1zM824,114h1v11h-1zM825,125h1v13h-1zM826,138h1v13h-1zM827,151h1v15h-1zM828,166h1v15h-1zM829,181h1v17h-1zM830,198h1v17h-1zM831,215h1v18h-1zM832,233h1v18h-1zM833,251h1v18h-1zM834,269h1v18h-1zM835,287h1v19h-1zM836,306h1v18h-1zM837,324h1v18h-1zM838,342h1v17h-1zM839,359h1v16h-1zM840,375h1v16h-1zM841,391h1v14h-1zM842,405h1v14h-1zM843,419h1v12h-1zM844,431h1v11h-1zM845,442h1v10h-1zM846,452h1v8h-1zM847,460h1v6h-1zM848,466h1v5h-1zM849,471h1v3h-1zM850,474h1v1h-1zM851,475h1v1h-1zM852,474h1v2h-1zM853,470h1v4h-1zM854,465h1v5h-1zM855,458h1v7h-1zM856,449h1v9h-1zM857,439h1v10h-1zM858,428h1v11h-1zM859,415h1v13h-1zM860,401h1v14h-1zM861,386h1v15h-1zM862,370h1v16h-1zM863,353h1v17h-1zM864,336h1v17h-1zM865,318h1v18h-1zM866,300h1v18h-1zM867,281h1v19h-1zM868,263h1v18h-1zM869,244h1v19h-1zM870,226h1v18h-1zM871,208h1v18h-1zM872,191h1v17h-1zM873,175h1v16h-1zM874,159h1v16h-1zM875,145h1v14h-1zM876,132h1v13h-1zM877,119h1v13h-1zM878,109h1v10h-1zM879,100h1v9h-1zM880,92h1v8h-1zM881,86h1v6h-1zM882,81h1v5h-1zM883,78h1v3h-1zM884,77h1v1h-1zM885,76h1v1h-1zM886,77h1v2h-1zM887,79h1v5h-1zM888,84h1v5h-1zM889,89h1v8h-1zM890,97h1v9h-1zM891,106h1v10h-1zM892,116h1v12h-1zM893,128h1v13h-1zM894,141h1v14h-1zM895,155h1v15h-1zM896,170h1v16h-1zM897,186h1v17h-1zM898,203h1v18h-1zM899,221h1v18h-1zM900,239h1v18h-1zM901,257h1v19h-1zM902,276h1v18h-1zM903,294h1v19h-1zM904,313h1v18h-1zM905,331h1v17h-1zM906,348h1v17h-1zM907,365h1v16h-1zM908,381h1v16h-1zM909,397h1v14h-1zM910,411h1v13h-1zM911,424h1v12h-1zM912,436h1v10h-1zM913,446h1v9h-1zM914,455h1v7h-1zM915,462h1v6h-1zM916,468h1v4h-1zM917,472h1v3h-1zM918,475h1v1h-1zM919,475h1v1h-1zM920,473h1v2h-1zM921,468h1v5h-1zM922,462h1v6h-1zM923,455h1v7h-1zM924,445h1v10h-1zM925,435h1v10h-1zM926,423h1v12h-1zM927,410h1v13h-1zM928,395h1v15h-1zM929,380h1v15h-1zM930,363h1v17h-1zM931,346h1v17h-1zM932,329h1v17h-1zM933,311h1v18h-1zM934,292h1v19h-1zM935,274h1v18h-1zM936,256h1v18h-1zM937,238h1v18h-1zM938,220h1v18h-1zM939,203h1v17h-1zM940,186h1v17h-1zM941,170h1v16h-1zM942,155h1v15h-1zM943,142h1v13h-1zM944,129h1v13h-1zM945,118h1v11h-1zM946,108h1v10h-1zM947,99h1v9h-1zM948,92h1v7h-1zM949,87h1v5h-1zM950,83h1v4h-1zM951,81h1v2h-1zM952,80h1v1h-1zM953,79h1v2h-1zM954,81h1v3h-1zM955,84h1v4h-1zM956,88h1v7h-1zM957,95h1v8h-1zM958,103h1v9h-1zM959,112h1v11h-1zM960,123h1v12h-1zM961,135h1v13h-1zM962,148h1v15h-1zM963,163h1v15h-1zM964,178h1v16h-1zM965,194h1v17h-1zM966,211h1v18h-1zM967,229h1v18h-1zM968,247h1v18h-1zM969,265h1v18h-1zM970,283h1v19h-1zM971,302h1v18h-1zM972,320h1v18h-1zM973,338h1v17h-1zM974,355h1v17h-1zM975,372h1v16h-1zM976,388h1v14h-1zM977,402h1v14h-1zM978,416h1v13h-1zM979,429h1v11h-1zM980,440h1v10h-1zM981,450h1v8h-1zM982,458h1v7h-1zM983,465h1v5h-1zM984,470h1v4h-1zM985,474h1v1h-1zM986,475h1v1h-1zM987,475h1v1h-1zM988,471h1v4h-1zM989,466h1v5h-1zM990,459h1v7h-1zM991,451h1v8h-1zM992,441h1v10h-1zM993,430h1v11h-1zM994,418h1v12h-1zM995,404h1v14h-1zM996,389h1v15h-1zM997,373h1v16h-1zM998,357h1v16h-1zM999,339h1v18h-1zM1000,322h1v17h-1zM1001,303h1v19h-1zM1002,285h1v18h-1zM1003,267h1v18h-1zM1004,248h1v19h-1zM1005,230h1v18h-1zM1006,213h1v17h-1zM1007,196h1v17h-1zM1008,180h1v16h-1zM1009,164h1v16h-1zM1010,150h1v14h-1zM1011,136h1v14h-1zM1012,124h1v12h-1zM1013,113h1v11h-1zM1014,104h1v9h-1zM1015,96h1v8h-1zM1016,90h1v6h-1zM1017,85h1v5h-1zM1018,82h1v3h-1zM1019,80h1v2h-1zM1020,79h1v1h-1zM1021,80h1v2h-1zM1022,82h1v3h-1zM1023,85h1v6h-1zM1024,91h1v7h-1zM1025,98h1v8h-1zM1026,106h1v10h-1zM1027,116h1v11h-1zM1028,127h1v13h-1zM1029,140h1v14h-1zM1030,154h1v15h-1zM1031,169h1v15h-1zM1032,184h1v17h-1zM1033,201h1v17h-1zM1034,218h1v18h-1zM1035,236h1v18h-1zM1036,254h1v18h-1zM1037,272h1v19h-1zM1038,291h1v18h-1zM1039,309h1v18h-1zM1040,327h1v18h-1zM1041,345h1v17h-1zM1042,362h1v16h-1zM1043,378h1v16h-1zM1044,394h1v14h-1zM1045,408h1v13h-1zM1046,421h1v12h-1zM1047,433h1v11h-1zM1048,444h1v9h-1zM1049,453h1v8h-1zM1050,461h1v6h-1zM1051,467h1v5h-1zM1052,472h1v2h-1zM1053,474h1v1h-1zM1054,475h1v1h-1zM1055,473h1v3h-1zM1056,469h1v4h-1zM1057,464h1v5h-1zM1058,456h1v8h-1zM1059,448h1v8h-1zM1060,437h1v11h-1zM1061,425h1v12h-1zM1062,412h1v13h-1zM1063,398h1v14h-1zM1064,383h1v15h-1zM1065,367h1v16h-1zM1066,350h1v17h-1zM1067,332h1v18h-1zM1068,314h1v18h-1zM1069,296h1v18h-1zM1070,278h1v18h-1zM1071,259h1v19h-1zM1072,241h1v18h-1zM1073,223h1v18h-1zM1074,206h1v17h-1zM1075,189h1v17h-1zM1076,173h1v16h-1zM1077,158h1v15h-1zM1078,144h1v14h-1zM1079,131h1v13h-1zM1080,120h1v11h-1zM1081,110h1v10h-1zM1082,101h1v9h-1zM1083,93h1v8h-1zM1084,88h1v5h-1zM1085,84h1v4h-1zM1086,81h1v3h-1zM1087,80h1v1h-1zM1088,79h1v1h-1zM1089,80h1v3h-1zM1090,83h1v4h-1zM1091,87h1v6h-1zM1092,93h1v8h-1zM1093,101h1v9h-1zM1094,110h1v10h-1zM1095,120h1v12h-1zM1096,132h1v13h-1zM1097,145h1v15h-1zM1098,160h1v15h-1zM1099,175h1v16h-1zM1100,191h1v17h-1zM1101,208h1v17h-1zM1102,225h1v18h-1zM1103,243h1v18h-1zM1104,261h1v18h-1zM1105,279h1v19h-1zM1106,298h1v18h-1zM1107,316h1v18h-1zM1108,334h1v18h-1zM1109,352h1v16h-1zM1110,368h1v16h-1zM1111,384h1v15h-1zM1112,399h1v14h-1zM1113,413h1v13h-1zM1114,426h1v12h-1zM1115,438h1v10h-1zM1116,448h1v9h-1zM1117,457h1v7h-1zM1118,464h1v5h-1zM1119,469h1v4h-1zM1120,473h1v2h-1zM1121,475h1v1h-1zM1122,475h1v1h-1zM1123,472h1v3h-1zM1124,467h1v5h-1zM1125,461h1v6h-1zM1126,453h1v8h-1zM1127,444h1v9h-1zM1128,433h1v11h-1zM1129,420h1v13h-1zM1130,407h1v13h-1zM1131,392h1v15h-1zM1132,377h1v15h-1zM1133,360h1v17h-1zM1134,343h1v17h-1zM1135,325h1v18h-1zM1136,307h1v18h-1zM1137,289h1v18h-1zM1138,270h1v19h-1zM1139,252h1v18h-1zM1140,234h1v18h-1zM1141,216h1v18h-1zM1142,198h1v18h-1zM1143,182h1v16h-1zM1144,166h1v16h-1zM1145,151h1v15h-1zM1146,137h1v14h-1zM1147,124h1v13h-1zM1148,113h1v11h-1zM1149,103h1v10h-1zM1150,95h1v8h-1zM1151,88h1v7h-1zM1152,83h1v5h-1zM1153,79h1v4h-1zM1154,78h1v1h-1zM1155,77h1v1h-1zM1156,77h1v1h-1zM1157,78h1v4h-1zM1158,82h1v5h-1zM1159,87h1v6h-1zM1160,93h1v9h-1zM1161,102h1v9h-1zM1162,111h1v12h-1zM1163,123h1v12h-1zM1164,135h1v14h-1zM1165,149h1v15h-1zM1166,164h1v16h-1zM1167,180h1v16h-1zM1168,196h1v18h-1zM1169,214h1v17h-1zM1170,231h1v19h-1zM1171,250h1v18h-1zM1172,268h1v19h-1zM1173,287h1v18h-1zM1174,305h1v18h-1zM1175,323h1v18h-1zM1176,341h1v17h-1zM1177,358h1v17h-1zM1178,375h1v15h-1zM1179,390h1v15h-1zM1180,405h1v14h-1zM1181,419h1v12h-1zM1182,431h1v11h-1zM1183,442h1v10h-1zM1184,452h1v8h-1zM1185,460h1v6h-1zM1186,466h1v5h-1zM1187,471h1v3h-1zM1188,474h1v1h-1zM1189,475h1v1h-1zM1190,474h1v2h-1zM1191,470h1v4h-1zM1192,465h1v5h-1zM1193,458h1v7h-1zM1194,449h1v9h-1zM1195,439h1v10h-1zM1196,428h1v11h-1zM1197,415h1v13h-1zM1198,401h1v14h-1zM1199,386h1v15h-1zM1200,370h1v16h-1zM1201,354h1v16h-1zM1202,336h1v18h-1zM1203,318h1v18h-1zM1204,300h1v18h-1zM1205,282h1v18h-1zM1206,263h1v19h-1zM1207,245h1v18h-1zM1208,227h1v18h-1zM1209,210h1v17h-1zM1210,193h1v17h-1zM1211,177h1v16h-1zM1212,161h1v16h-1zM1213,147h1v14h-1zM1214,134h1v13h-1zM1215,122h1v12h-1zM1216,112h1v10h-1zM1217,102h1v10h-1zM1218,95h1v7h-1zM1219,89h1v6h-1zM1220,84h1v5h-1zM1221,81h1v3h-1zM1222,80h1v1h-1zM1223,79h1v1h-1zM1224,80h1v2h-1zM1225,82h1v4h-1zM1226,86h1v6h-1zM1227,92h1v7h-1zM1228,99h1v9h-1zM1229,108h1v10h-1zM1230,118h1v12h-1zM1231,130h1v12h-1zM1232,142h1v14h-1zM1233,156h1v15h-1zM1234,171h1v16h-1zM1235,187h1v17h-1zM1236,204h1v17h-1zM1237,221h1v18h-1zM1238,239h1v18h-1zM1239,257h1v19h-1zM1240,276h1v18h-1zM1241,294h1v18h-1zM1242,312h1v18h-1zM1243,330h1v18h-1zM1244,348h1v17h-1zM1245,365h1v16h-1zM1246,381h1v15h-1zM1247,396h1v15h-1zM1248,411h1v13h-1zM1249,424h1v11h-1zM1250,435h1v11h-1zM1251,446h1v9h-1zM1252,455h1v7h-1zM1253,462h1v6h-1zM1254,468h1v4h-1zM1255,472h1v3h-1zM1256,475h1v1h-1zM1257,475h1v1h-1zM1258,473h1v3h-1zM1259,468h1v5h-1zM1260,462h1v6h-1zM1261,455h1v7h-1zM1262,446h1v9h-1zM1263,435h1v11h-1zM1264,423h1v12h-1zM1265,410h1v13h-1zM1266,396h1v14h-1zM1267,380h1v16h-1zM1268,364h1v16h-1zM1269,347h1v17h-1zM1270,329h1v18h-1zM1271,311h1v18h-1zM1272,293h1v18h-1zM1273,274h1v19h-1zM1274,256h1v18h-1zM1275,238h1v18h-1zM1276,220h1v18h-1zM1277,203h1v17h-1zM1278,186h1v17h-1zM1279,171h1v15h-1zM1280,156h1v15h-1zM1281,142h1v14h-1zM1282,129h1v13h-1zM1283,118h1v11h-1zM1284,108h1v10h-1zM1285,99h1v9h-1zM1286,92h1v7h-1zM1287,87h1v5h-1zM1288,83h1v4h-1zM1289,81h1v2h-1zM1290,80h1v1h-1zM1291,79h1v2h-1zM1292,81h1v3h-1zM1293,84h1v4h-1zM1294,88h1v7h-1zM1295,95h1v7h-1zM1296,102h1v10h-1zM1297,112h1v11h-1zM1298,123h1v12h-1zM1299,135h1v13h-1zM1300,148h1v14h-1zM1301,162h1v16h-1zM1302,178h1v16h-1zM1303,194h1v17h-1zM1304,211h1v17h-1zM1305,228h1v18h-1zM1306,246h1v18h-1zM1307,264h1v19h-1zM1308,283h1v18h-1zM1309,301h1v19h-1zM1310,320h1v17h-1zM1311,337h1v18h-1zM1312,355h1v16h-1zM1313,371h1v16h-1zM1314,387h1v15h-1zM1315,402h1v14h-1zM1316,416h1v12h-1zM1317,428h1v12h-1zM1318,440h1v10h-1zM1319,450h1v8h-1zM1320,458h1v7h-1zM1321,465h1v5h-1zM1322,470h1v3h-1zM1323,473h1v2h-1zM1324,475h1v1h-1zM1325,475h1v1h-1zM1326,471h1v4h-1zM1327,466h1v5h-1zM1328,460h1v6h-1zM1329,451h1v9h-1zM1330,442h1v9h-1zM1331,431h1v11h-1zM1332,418h1v13h-1zM1333,404h1v14h-1zM1334,390h1v14h-1zM1335,374h1v16h-1zM1336,357h1v17h-1zM1337,340h1v17h-1zM1338,322h1v18h-1zM1339,304h1v18h-1zM1340,285h1v19h-1zM1341,267h1v18h-1zM1342,249h1v18h-1zM1343,231h1v18h-1zM1344,213h1v18h-1zM1345,196h1v17h-1zM1346,180h1v16h-1zM1347,165h1v15h-1zM1348,150h1v15h-1zM1349,137h1v13h-1zM1350,125h1v12h-1zM1351,114h1v11h-1zM1352,104h1v10h-1zM1353,96h1v8h-1zM1354,90h1v6h-1zM1355,85h1v5h-1zM1356,82h1v3h-1zM1357,81h1v1h-1zM1358,80h1v1h-1zM1359,80h1v2h-1zM1360,82h1v3h-1zM1361,85h1v6h-1zM1362,91h1v7h-1zM1363,98h1v8h-1zM1364,106h1v10h-1zM1365,116h1v11h-1zM1366,127h1v13h-1zM1367,140h1v13h-1zM1368,153h1v15h-1zM1369,168h1v16h-1zM1370,184h1v17h-1zM1371,201h1v17h-1zM1372,218h1v17h-1zM1373,235h1v18h-1zM1374,253h1v19h-1zM1375,272h1v18h-1zM1376,290h1v19h-1zM1377,309h1v18h-1zM1378,327h1v17h-1zM1379,344h1v17h-1zM1380,361h1v17h-1zM1381,378h1v15h-1zM1382,393h1v15h-1zM1383,408h1v13h-1zM1384,421h1v12h-1z"/>
<text x="45.5" y="61" font-size="10.5" fill="#d0d0d0" font-family="Liberation Serif" text-anchor="end" textLength="20.5" lengthAdjust="spacingAndGlyphs" >45.83</text>
<text x="45.5" y="116" font-size="10.5" fill="#d0d0d0" font-family="Liberation Serif" text-anchor="end" textLength="20.5" lengthAdjust="spacingAndGlyphs" >37.41</text>
<text x="45.5" y="171" font-size="10.5" fill="#d0d0d0" font-family="Liberation Serif" text-anchor="end" textLength="20.5" lengthAdjust="spacingAndGlyphs" >24.94</text>
<text x="45.5" y="226" font-size="10.5" fill="#d0d0d0" font-family="Liberation Serif" text-anchor="end" textLength="20.5" lengthAdjust="spacingAndGlyphs" >12.47</text>
<text x="45.5" y="281" font-size="10.5" fill="#d0d0d0" font-family="Liberation Serif" text-anchor="end" textLength="16.4" lengthAdjust="spacingAndGlyphs" >0.00</text>
<text x="45.5" y="336" font-size="10.5" fill="#d0d0d0" font-family="Liberation Serif" text-anchor="end" textLength="24.599999999999998" lengthAdjust="spacingAndGlyphs" >-12.47</text>
<text x="45.5" y="391" font-size="10.5" fill="#d0d0d0" font-family="Liberation Serif" text-anchor="end" textLength="24.599999999999998" lengthAdjust="spacingAndGlyphs" >-24.94</text>
<text x="45.5" y="446" font-size="10.5" fill="#d0d0d0" font-family="Liberation Serif" text-anchor="end" textLength="24.599999999999998" lengthAdjust="spacingAndGlyphs" >-37.41</text>
<text x="45.5" y="501" font-size="10.5" fill="#d0d0d0" font-family="Liberation Serif" text-anchor="end" textLength="24.599999999999998" lengthAdjust="spacingAndGlyphs" >-49.88</text>
<text x="1389.5" y="61" font-size="10.5" fill="#000" font-family="Liberation Serif" textLength="20.5" lengthAdjust="spacingAndGlyphs" >45.83</text>
<text x="1389.5" y="116" font-size="10.5" fill="#000" font-family="Liberation Serif" textLength="20.5" lengthAdjust="spacingAndGlyphs" >37.41</text>
<text x="1389.5" y="171" font-size="10.5" fill="#000" font-family="Liberation Serif" textLength="20.5" lengthAdjust="spacingAndGlyphs" >24.94</text>
<text x="1389.5" y="226" font-size="10.5" fill="#000" font-family="Liberation Serif" textLength="20.5" lengthAdjust="spacingAndGlyphs" >12.47</text>
<text x="1389.5" y="281" font-size="10.5" fill="#000" font-family="Liberation Serif" textLength="16.4" lengthAdjust="spacingAndGlyphs" >0.00</text>
<text x="1389.5" y="336" font-size="10.5" fill="#000" font-family="Liberation Serif" textLength="24.599999999999998" lengthAdjust="spacingAndGlyphs" >-12.47</text>
<text x="1389.5" y="391" font-size="10.5" fill="#000" font-family="Liberation Serif" textLength="24.599999999999998" lengthAdjust="spacingAndGlyphs" >-24.94</text>
<text x="1389.5" y="446" font-size="10.5" fill="#000" font-family="Liberation Serif" textLength="24.599999999999998" lengthAdjust="spacingAndGlyphs" >-37.41</text>
<text x="1389.5" y="501" font-size="10.5" fill="#000" font-family="Liberation Serif" textLength="24.599999999999998" lengthAdjust="spacingAndGlyphs" >-49.88</text>
<rect x="0" y="50" width="1920" height="7" fill="#f0f0f0" />
<path d="M10,277.5 L26,277.5 M22,274 L26,277.5 L22,281" stroke="#000" stroke-width="1.3" fill="none"/>
<path d="M1424,277.5 L1408,277.5 M1411,274.5 L1408,277.5 L1411,280.5" stroke="#000" stroke-width="1.3" fill="none"/>
<text x="1325" y="77" font-size="13" fill="#00ff00" textLength="41" lengthAdjust="spacingAndGlyphs" >D/A On</text>
<rect x="0" y="498" width="1428" height="21" fill="#f0f0f0" />
<text x="10" y="511" font-size="13" fill="#000" textLength="78" lengthAdjust="spacingAndGlyphs" >0.00 - 8.91mS</text>
<rect x="113" y="503" width="1298" height="9" fill="#e6e9ea" />
<rect x="113" y="503" width="1298" height="1" fill="#a8a8a8"/>
<rect x="113" y="511" width="1298" height="1" fill="#ffffff"/>
<rect x="113" y="503" width="1" height="8" fill="#a8a8a8"/>
<rect x="113.5" y="501.5" width="7" height="14" rx="2" fill="#f2f2f2" stroke="#8a8a8a"/>
<text x="1418" y="511" font-size="13" fill="#000" textLength="105" lengthAdjust="spacingAndGlyphs" >%fullscale =-89.38</text>
<rect x="10" y="498" width="39" height="0" fill="#808080" />
<rect x="0" y="0" width="1920" height="27" fill="url(#gTitle)" />
<rect x="0" y="0" width="1920" height="27" fill="url(#gTitleV)" />
<rect x="0" y="0" width="500" height="4" fill="url(#gTL)" />
<rect x="0" y="4" width="500" height="4" fill="url(#gTL)" opacity="0.6"/>
<rect x="0" y="8" width="500" height="3" fill="url(#gTL)" opacity="0.25"/>
<rect x="0" y="25" width="1920" height="1" fill="#c8cce0"/>
<rect x="0" y="26" width="1920" height="1" fill="#4a4a62"/>
<rect x="0" y="3" width="20" height="20" fill="#00e400" />
<rect x="1.5" y="4.5" width="17" height="17" fill="#0a4a0a" />
<rect x="1.5" y="4.5" width="1.9" height="1.9" fill="#a898e0" />
<rect x="1.5" y="7.4" width="1.9" height="1.9" fill="#a898e0" />
<rect x="1.5" y="10.3" width="1.9" height="1.9" fill="#a898e0" />
<rect x="1.5" y="13.2" width="1.9" height="1.9" fill="#a898e0" />
<rect x="1.5" y="16.1" width="1.9" height="1.9" fill="#a898e0" />
<rect x="1.5" y="19.0" width="1.9" height="1.9" fill="#a898e0" />
<rect x="4.4" y="4.5" width="1.9" height="1.9" fill="#a898e0" />
<rect x="4.4" y="7.4" width="1.9" height="1.9" fill="#a898e0" />
<rect x="4.4" y="10.3" width="1.9" height="1.9" fill="#a898e0" />
<rect x="4.4" y="13.2" width="1.9" height="1.9" fill="#a898e0" />
<rect x="4.4" y="16.1" width="1.9" height="1.9" fill="#a898e0" />
<rect x="4.4" y="19.0" width="1.9" height="1.9" fill="#a898e0" />
<rect x="7.3" y="4.5" width="1.9" height="1.9" fill="#a898e0" />
<rect x="7.3" y="7.4" width="1.9" height="1.9" fill="#a898e0" />
<rect x="7.3" y="10.3" width="1.9" height="1.9" fill="#a898e0" />
<rect x="7.3" y="13.2" width="1.9" height="1.9" fill="#a898e0" />
<rect x="7.3" y="16.1" width="1.9" height="1.9" fill="#a898e0" />
<rect x="7.3" y="19.0" width="1.9" height="1.9" fill="#a898e0" />
<rect x="10.2" y="4.5" width="1.9" height="1.9" fill="#a898e0" />
<rect x="10.2" y="7.4" width="1.9" height="1.9" fill="#a898e0" />
<rect x="10.2" y="10.3" width="1.9" height="1.9" fill="#a898e0" />
<rect x="10.2" y="13.2" width="1.9" height="1.9" fill="#a898e0" />
<rect x="10.2" y="16.1" width="1.9" height="1.9" fill="#a898e0" />
<rect x="10.2" y="19.0" width="1.9" height="1.9" fill="#a898e0" />
<rect x="13.1" y="4.5" width="1.9" height="1.9" fill="#a898e0" />
<rect x="13.1" y="7.4" width="1.9" height="1.9" fill="#a898e0" />
<rect x="13.1" y="10.3" width="1.9" height="1.9" fill="#a898e0" />
<rect x="13.1" y="13.2" width="1.9" height="1.9" fill="#a898e0" />
<rect x="13.1" y="16.1" width="1.9" height="1.9" fill="#a898e0" />
<rect x="13.1" y="19.0" width="1.9" height="1.9" fill="#a898e0" />
<rect x="16.0" y="4.5" width="1.9" height="1.9" fill="#a898e0" />
<rect x="16.0" y="7.4" width="1.9" height="1.9" fill="#a898e0" />
<rect x="16.0" y="10.3" width="1.9" height="1.9" fill="#a898e0" />
<rect x="16.0" y="13.2" width="1.9" height="1.9" fill="#a898e0" />
<rect x="16.0" y="16.1" width="1.9" height="1.9" fill="#a898e0" />
<rect x="16.0" y="19.0" width="1.9" height="1.9" fill="#a898e0" />
<rect x="3.4000000000000004" y="4.5" width="1" height="17.0" fill="#00d000"/>
<rect x="6.3" y="4.5" width="1" height="17.0" fill="#00d000"/>
<rect x="9.2" y="4.5" width="1" height="17.0" fill="#00d000"/>
<rect x="12.1" y="4.5" width="1" height="17.0" fill="#00d000"/>
<rect x="15.0" y="4.5" width="1" height="17.0" fill="#00d000"/>
<path d="M1,17.5 l3,0 l2,-5 l1.5,-8 l3,0 l1,7 l2,3 l5,0" stroke="#f0f000" fill="none" stroke-width="1"/>
<path d="M1.5,20 l6,0 M10,21 l9,0 M1.5,18.5 l7,0" stroke="#e00000" fill="none" stroke-width="1.1"/>
<rect x="15" y="4" width="4" height="3" fill="#f02020" />
<text x="25" y="19" font-size="15.5" fill="#000" textLength="466" lengthAdjust="spacingAndGlyphs" opacity="0.92">VA -- Visual Analyser 2014 rel. 0.3.1 STD 64 bit - Licensed to: No license</text>
<rect x="1789.5" y="-3" width="127" height="25.5" rx="4" fill="#ffffff" fill-opacity="0.06" stroke="#3a3650" stroke-opacity="0.7"/>
<rect x="1790.5" y="-2" width="125" height="23.5" rx="3" fill="none" stroke="#ffffff" stroke-opacity="0.35"/>
<rect x="1823" y="0" width="1" height="22" fill="#3a3650"/>
<rect x="1824" y="0" width="1" height="22" fill="#e0d0d8"/>
<rect x="1856" y="0" width="1" height="22" fill="#3a3650"/>
<rect x="1857" y="0" width="1" height="22" fill="#e0d0d8"/>
<rect x="1799.5" y="13.5" width="15" height="4" fill="#f0f0f0" stroke="#3a3a50"/>
<rect x="1835.5" y="2.5" width="12" height="12" fill="#f0f0f0" stroke="#3a3a50"/>
<rect x="1831.5" y="5.5" width="13" height="13" fill="#f0f0f0" stroke="#3a3a50"/>
<rect x="1835.5" y="9.5" width="5" height="3" fill="#3a3a50" stroke="#3a3a50"/>
<path d="M1880,5 L1894,17 M1894,5 L1880,17" stroke="#3a3a50" stroke-width="5" stroke-linecap="square"/>
<path d="M1880,5 L1894,17 M1894,5 L1880,17" stroke="#f4f4f4" stroke-width="3" stroke-linecap="square"/>
<rect x="1.5" y="28.5" width="34" height="20" rx="3" fill="url(#gBtnBlue)" stroke="#3c7fb1"/>
<rect x="2.5" y="29.5" width="32" height="18" rx="2" fill="none" stroke="#ffffff" stroke-opacity="0.6"/>
<text x="18.5" y="43.54" font-size="14" fill="#000" font-weight="bold" text-anchor="middle" >Off</text>
<rect x="38.5" y="28.5" width="68" height="20" rx="3" fill="url(#gBtn)" stroke="#707070"/>
<rect x="39.5" y="29.5" width="66" height="18" rx="2" fill="none" stroke="#ffffff" stroke-opacity="0.6"/>
<text x="72.5" y="43.18" font-size="13" fill="#000" text-anchor="middle" >Settings</text>
<rect x="110.5" y="28.5" width="67" height="20" rx="3" fill="url(#gBtn)" stroke="#707070"/>
<rect x="111.5" y="29.5" width="65" height="18" rx="2" fill="none" stroke="#ffffff" stroke-opacity="0.6"/>
<text x="144.0" y="43.18" font-size="13" fill="#000" text-anchor="middle" >Phase</text>
<rect x="181.5" y="28.5" width="67" height="20" rx="3" fill="url(#gBtn)" stroke="#707070"/>
<rect x="182.5" y="29.5" width="65" height="18" rx="2" fill="none" stroke="#ffffff" stroke-opacity="0.6"/>
<text x="215.0" y="43.18" font-size="13" fill="#000" text-anchor="middle" >Wave</text>
<rect x="252.5" y="28.5" width="67" height="20" rx="3" fill="url(#gBtn)" stroke="#707070"/>
<rect x="253.5" y="29.5" width="65" height="18" rx="2" fill="none" stroke="#ffffff" stroke-opacity="0.6"/>
<text x="286.0" y="43.18" font-size="13" fill="#000" text-anchor="middle" textLength="65" lengthAdjust="spacingAndGlyphs" >Freq.meter</text>
<rect x="323.5" y="28.5" width="68" height="20" rx="3" fill="url(#gBtn)" stroke="#707070"/>
<rect x="324.5" y="29.5" width="66" height="18" rx="2" fill="none" stroke="#ffffff" stroke-opacity="0.6"/>
<text x="357.5" y="43.18" font-size="13" fill="#000" text-anchor="middle" >Filters</text>
<rect x="395.5" y="28.5" width="152" height="20" rx="3" fill="url(#gBtn)" stroke="#707070"/>
<rect x="396.5" y="29.5" width="150" height="18" rx="2" fill="none" stroke="#ffffff" stroke-opacity="0.6"/>
<text x="471.5" y="43.18" font-size="13" fill="#000" text-anchor="middle" textLength="145" lengthAdjust="spacingAndGlyphs" >Floating Windows mode</text>
<rect x="551.5" y="28.5" width="67" height="20" rx="3" fill="url(#gBtn)" stroke="#707070"/>
<rect x="552.5" y="29.5" width="65" height="18" rx="2" fill="none" stroke="#ffffff" stroke-opacity="0.6"/>
<text x="585.0" y="43.54" font-size="14" fill="#000" font-weight="bold" text-anchor="middle" >HELP</text>
<rect x="621.5" y="27.5" width="145" height="23" rx="3" fill="url(#gBtn)" stroke="#707070"/>
<rect x="622.5" y="28.5" width="143" height="21" rx="2" fill="none" stroke="#ffffff" stroke-opacity="0.6"/>
<text x="626" y="44" font-size="13" fill="#000" textLength="121" lengthAdjust="spacingAndGlyphs" clip-path="url(#cCombo)">Default Windows inp</text>
<path d="M750,36 L760,36 L755,42 Z" fill="#000"/>
<rect x="773.5" y="30.5" width="146" height="4" fill="#e7eaea" stroke="#b0b0b0" stroke-opacity="0.8"/>
<rect x="915.5" y="29.5" width="5" height="8" rx="1" fill="#f0f0f0" stroke="#909090"/>
<rect x="775" y="40" width="1" height="3" fill="#a0a0a0"/>
<rect x="789" y="40" width="1" height="3" fill="#a0a0a0"/>
<rect x="804" y="40" width="1" height="3" fill="#a0a0a0"/>
<rect x="818" y="40" width="1" height="3" fill="#a0a0a0"/>
<rect x="832" y="40" width="1" height="3" fill="#a0a0a0"/>
<rect x="846" y="40" width="1" height="3" fill="#a0a0a0"/>
<rect x="861" y="40" width="1" height="3" fill="#a0a0a0"/>
<rect x="875" y="40" width="1" height="3" fill="#a0a0a0"/>
<rect x="889" y="40" width="1" height="3" fill="#a0a0a0"/>
<rect x="904" y="40" width="1" height="3" fill="#a0a0a0"/>
<rect x="918" y="40" width="1" height="3" fill="#a0a0a0"/>
<rect x="932.5" y="30.5" width="146" height="4" fill="#e7eaea" stroke="#b0b0b0" stroke-opacity="0.8"/>
<rect x="1074.5" y="29.5" width="5" height="8" rx="1" fill="#f0f0f0" stroke="#909090"/>
<rect x="934" y="40" width="1" height="3" fill="#a0a0a0"/>
<rect x="948" y="40" width="1" height="3" fill="#a0a0a0"/>
<rect x="963" y="40" width="1" height="3" fill="#a0a0a0"/>
<rect x="977" y="40" width="1" height="3" fill="#a0a0a0"/>
<rect x="991" y="40" width="1" height="3" fill="#a0a0a0"/>
<rect x="1006" y="40" width="1" height="3" fill="#a0a0a0"/>
<rect x="1020" y="40" width="1" height="3" fill="#a0a0a0"/>
<rect x="1034" y="40" width="1" height="3" fill="#a0a0a0"/>
<rect x="1048" y="40" width="1" height="3" fill="#a0a0a0"/>
<rect x="1063" y="40" width="1" height="3" fill="#a0a0a0"/>
<rect x="1077" y="40" width="1" height="3" fill="#a0a0a0"/>
<rect x="1088.5" y="28.5" width="84" height="20" rx="3" fill="url(#gBtn)" stroke="#707070"/>
<rect x="1089.5" y="29.5" width="82" height="18" rx="2" fill="none" stroke="#ffffff" stroke-opacity="0.6"/>
<text x="1130.5" y="43.18" font-size="13" fill="#000" text-anchor="middle" >Input Gain</text>
<rect x="1175.5" y="28.5" width="84" height="20" rx="3" fill="url(#gBtn)" stroke="#707070"/>
<rect x="1176.5" y="29.5" width="82" height="18" rx="2" fill="none" stroke="#ffffff" stroke-opacity="0.6"/>
<text x="1217.5" y="43.18" font-size="13" fill="#000" text-anchor="middle" >Output Gain</text>
<rect x="1262.5" y="28.5" width="67" height="20" rx="3" fill="url(#gBtn)" stroke="#707070"/>
<rect x="1263.5" y="29.5" width="65" height="18" rx="2" fill="none" stroke="#ffffff" stroke-opacity="0.6"/>
<text x="1296.0" y="43.18" font-size="13" fill="#000" font-style="italic" text-anchor="middle" >About</text>
<text x="1433" y="74" font-size="13" fill="#000" >Frequency (Hz)</text>
<rect x="1433" y="78" width="90" height="26" fill="#f0f0f0" />
<rect x="1433" y="78" width="90" height="1" fill="#a0a0a0"/>
<rect x="1433" y="79" width="90" height="1" fill="#a0a0a0"/>
<rect x="1434" y="80" width="89" height="1" fill="#a0a0a0"/>
<rect x="1433" y="78" width="1" height="26" fill="#a0a0a0"/>
<rect x="1434" y="78" width="1" height="25" fill="#a0a0a0"/>
<rect x="1435" y="78" width="1" height="24" fill="#a0a0a0"/>
<rect x="1436" y="81" width="87" height="1" fill="#d8d8d8"/>
<rect x="1433" y="102" width="90" height="1" fill="#ffffff"/>
<rect x="1433" y="103" width="90" height="1" fill="#a0a0a0"/>
<text x="1446" y="96" font-size="13" fill="#000" textLength="79" lengthAdjust="spacingAndGlyphs" >19967.03(±0.5</text>
<text x="1433" y="118" font-size="13" fill="#000" >Mean Value (%</text>
<rect x="1433" y="123" width="90" height="26" fill="#f0f0f0" />
<rect x="1433" y="123" width="90" height="1" fill="#a0a0a0"/>
<rect x="1433" y="124" width="90" height="1" fill="#a0a0a0"/>
<rect x="1434" y="125" width="89" height="1" fill="#a0a0a0"/>
<rect x="1433" y="123" width="1" height="26" fill="#a0a0a0"/>
<rect x="1434" y="123" width="1" height="25" fill="#a0a0a0"/>
<rect x="1435" y="123" width="1" height="24" fill="#a0a0a0"/>
<rect x="1436" y="126" width="87" height="1" fill="#d8d8d8"/>
<rect x="1433" y="147" width="90" height="1" fill="#ffffff"/>
<rect x="1433" y="148" width="90" height="1" fill="#a0a0a0"/>
<text x="1491.5" y="141" font-size="13" fill="#000" text-anchor="middle" >0.0004</text>
<text x="1433" y="162" font-size="13" fill="#000" >TRms (%fs)</text>
<rect x="1433" y="167" width="90" height="26" fill="#f0f0f0" />
<rect x="1433" y="167" width="90" height="1" fill="#a0a0a0"/>
<rect x="1433" y="168" width="90" height="1" fill="#a0a0a0"/>
<rect x="1434" y="169" width="89" height="1" fill="#a0a0a0"/>
<rect x="1433" y="167" width="1" height="26" fill="#a0a0a0"/>
<rect x="1434" y="167" width="1" height="25" fill="#a0a0a0"/>
<rect x="1435" y="167" width="1" height="24" fill="#a0a0a0"/>
<rect x="1436" y="170" width="87" height="1" fill="#d8d8d8"/>
<rect x="1433" y="191" width="90" height="1" fill="#ffffff"/>
<rect x="1433" y="192" width="90" height="1" fill="#a0a0a0"/>
<text x="1491.5" y="185" font-size="13" fill="#000" text-anchor="middle" >31.9559</text>
<text x="1433" y="207" font-size="13" fill="#000" >Crest factor (%f</text>
<rect x="1433" y="211" width="90" height="26" fill="#f0f0f0" />
<rect x="1433" y="211" width="90" height="1" fill="#a0a0a0"/>
<rect x="1433" y="212" width="90" height="1" fill="#a0a0a0"/>
<rect x="1434" y="213" width="89" height="1" fill="#a0a0a0"/>
<rect x="1433" y="211" width="1" height="26" fill="#a0a0a0"/>
<rect x="1434" y="211" width="1" height="25" fill="#a0a0a0"/>
<rect x="1435" y="211" width="1" height="24" fill="#a0a0a0"/>
<rect x="1436" y="214" width="87" height="1" fill="#d8d8d8"/>
<rect x="1433" y="235" width="90" height="1" fill="#ffffff"/>
<rect x="1433" y="236" width="90" height="1" fill="#a0a0a0"/>
<text x="1491.5" y="229" font-size="13" fill="#000" text-anchor="middle" >1.4315</text>
<text x="1433" y="251" font-size="13" fill="#000" >Peak (%fs)</text>
<rect x="1433" y="255" width="90" height="26" fill="#f0f0f0" />
<rect x="1433" y="255" width="90" height="1" fill="#a0a0a0"/>
<rect x="1433" y="256" width="90" height="1" fill="#a0a0a0"/>
<rect x="1434" y="257" width="89" height="1" fill="#a0a0a0"/>
<rect x="1433" y="255" width="1" height="26" fill="#a0a0a0"/>
<rect x="1434" y="255" width="1" height="25" fill="#a0a0a0"/>
<rect x="1435" y="255" width="1" height="24" fill="#a0a0a0"/>
<rect x="1436" y="258" width="87" height="1" fill="#d8d8d8"/>
<rect x="1433" y="279" width="90" height="1" fill="#ffffff"/>
<rect x="1433" y="280" width="90" height="1" fill="#a0a0a0"/>
<text x="1491.5" y="273" font-size="13" fill="#000" text-anchor="middle" >45.7443</text>
<text x="1433" y="295" font-size="13" fill="#000" >Peak to peak (%</text>
<rect x="1433" y="299" width="90" height="26" fill="#f0f0f0" />
<rect x="1433" y="299" width="90" height="1" fill="#a0a0a0"/>
<rect x="1433" y="300" width="90" height="1" fill="#a0a0a0"/>
<rect x="1434" y="301" width="89" height="1" fill="#a0a0a0"/>
<rect x="1433" y="299" width="1" height="26" fill="#a0a0a0"/>
<rect x="1434" y="299" width="1" height="25" fill="#a0a0a0"/>
<rect x="1435" y="299" width="1" height="24" fill="#a0a0a0"/>
<rect x="1436" y="302" width="87" height="1" fill="#d8d8d8"/>
<rect x="1433" y="323" width="90" height="1" fill="#ffffff"/>
<rect x="1433" y="324" width="90" height="1" fill="#a0a0a0"/>
<text x="1491.5" y="317" font-size="13" fill="#000" text-anchor="middle" >91.1285</text>
<text x="1433" y="339" font-size="13" fill="#000" >Form factor (%f</text>
<rect x="1433" y="341" width="90" height="26" fill="#f0f0f0" />
<rect x="1433" y="341" width="90" height="1" fill="#a0a0a0"/>
<rect x="1433" y="342" width="90" height="1" fill="#a0a0a0"/>
<rect x="1434" y="343" width="89" height="1" fill="#a0a0a0"/>
<rect x="1433" y="341" width="1" height="26" fill="#a0a0a0"/>
<rect x="1434" y="341" width="1" height="25" fill="#a0a0a0"/>
<rect x="1435" y="341" width="1" height="24" fill="#a0a0a0"/>
<rect x="1436" y="344" width="87" height="1" fill="#d8d8d8"/>
<rect x="1433" y="365" width="90" height="1" fill="#ffffff"/>
<rect x="1433" y="366" width="90" height="1" fill="#a0a0a0"/>
<text x="1491.5" y="359" font-size="13" fill="#000" text-anchor="middle" >87275.5032</text>
<rect x="1523" y="55" width="8" height="400" fill="#f0f0f0" />
<rect x="1433.5" y="385.5" width="14" height="14" fill="#ffffff" stroke="#8e8f8f"/>
<rect x="1435.5" y="387.5" width="10" height="10" fill="url(#gChk)" stroke="#aeb3b9" stroke-opacity="0.7"/>
<text x="1452" y="398" font-size="13" fill="#000" textLength="63" lengthAdjust="spacingAndGlyphs" >Infinite avg</text>
<rect x="1534.5" y="59.5" width="180" height="458" rx="3" fill="none" stroke="#d5dfe5"/>
<rect x="1539" y="57" width="48.078125" height="5" fill="#f0f0f0"/>
<text x="1541" y="63.68" font-size="13" fill="#000" >Ch A(L)</text>
<text x="1535" y="79" font-size="13" fill="#000" textLength="58" lengthAdjust="spacingAndGlyphs" >Vpos Trig</text>
<rect x="1547" y="85" width="5" height="389" fill="#e6e9ea"/>
<rect x="1547" y="85" width="1" height="389" fill="#a8a8a8"/>
<rect x="1570" y="85" width="5" height="389" fill="#e6e9ea"/>
<rect x="1570" y="85" width="1" height="389" fill="#a8a8a8"/>
<rect x="1566.5" y="84.5" width="9" height="5" rx="1" fill="#f4f4f4" stroke="#a0a0a0"/>
<rect x="1544.5" y="277.5" width="9" height="5" rx="1" fill="#f4f4f4" stroke="#a0a0a0"/>
<rect x="1603.5" y="71.5" width="19" height="15" rx="3" fill="url(#gBtn)" stroke="#707070"/>
<rect x="1604.5" y="72.5" width="17" height="13" rx="2" fill="none" stroke="#ffffff" stroke-opacity="0.6"/>
<text x="1613.0" y="83.32" font-size="12" fill="#000" text-anchor="middle" >0</text>
<text x="1681" y="83" font-size="13" fill="#000" text-anchor="end" textLength="30" lengthAdjust="spacingAndGlyphs" >ms/d</text>
<rect x="1602.5" y="89.5" width="59" height="21" fill="#f0f0f0" stroke="#c8d0d8"/>
<rect x="1603" y="90" width="58" height="1" fill="#e3e9ef" opacity="0.8"/>
<text x="1605" y="104.32" font-size="12" fill="#000" >0.0982</text>
<rect x="1664.5" y="90.5" width="17" height="11.0" fill="#f0f0f0" stroke="#b8b8b8"/>
<path d="M1669.0,98.0 L1677.0,98.0 L1673.0,93.5 Z" fill="#4d6fb8"/>
<rect x="1664.5" y="102.5" width="17" height="11.0" fill="#f0f0f0" stroke="#b8b8b8"/>
<path d="M1669.0,106.0 L1677.0,106.0 L1673.0,110.5 Z" fill="#4d6fb8"/>
<text x="1603" y="136" font-size="13" fill="#000" textLength="34" lengthAdjust="spacingAndGlyphs" >Zoom</text>
<text x="1593" y="152" font-size="11" fill="#000" >x</text>
<rect x="1602.5" y="137.5" width="59" height="22" fill="#f0f0f0" stroke="#c8d0d8"/>
<rect x="1603" y="138" width="58" height="1" fill="#e3e9ef" opacity="0.8"/>
<text x="1605" y="152.82" font-size="12" fill="#000" >1</text>
<rect x="1664.5" y="138.5" width="17" height="10.5" fill="#f0f0f0" stroke="#b8b8b8"/>
<path d="M1669.0,145.75 L1677.0,145.75 L1673.0,141.25 Z" fill="#4d6fb8"/>
<rect x="1664.5" y="150.0" width="17" height="10.5" fill="#f0f0f0" stroke="#b8b8b8"/>
<path d="M1669.0,153.25 L1677.0,153.25 L1673.0,157.75 Z" fill="#4d6fb8"/>
<rect x="1593.5" y="178.5" width="14" height="14" fill="#ffffff" stroke="#8e8f8f"/>
<rect x="1595.5" y="180.5" width="10" height="10" fill="url(#gChk)" stroke="#aeb3b9" stroke-opacity="0.7"/>
<path d="M1596.5,185.5 L1599.5,189 L1604.5,181.5" fill="none" stroke="#4a5f97" stroke-width="2.2"/>
<text x="1612" y="191" font-size="13" fill="#000" textLength="24" lengthAdjust="spacingAndGlyphs" >Trig</text>
<rect x="1644.5" y="178.5" width="14" height="14" fill="#ffffff" stroke="#8e8f8f"/>
<rect x="1646.5" y="180.5" width="10" height="10" fill="url(#gChk)" stroke="#aeb3b9" stroke-opacity="0.7"/>
<text x="1662" y="191" font-size="13" fill="#000" textLength="19" lengthAdjust="spacingAndGlyphs" >Inv</text>
<rect x="1593.5" y="206.5" width="87" height="119" rx="3" fill="none" stroke="#d5dfe5"/>
<rect x="1598" y="204" width="44.703125" height="5" fill="#f0f0f0"/>
<text x="1600" y="210.68" font-size="13" fill="#000" >Trigger</text>
<text x="1612" y="229" font-size="13" fill="#000" textLength="34" lengthAdjust="spacingAndGlyphs" >Slope</text>
<circle cx="1606.5" cy="241.5" r="7.0" fill="#fafafa" stroke="#8e8f8f"/>
<circle cx="1606.5" cy="241.5" r="4.5" fill="url(#gRadOn)"/>
<text x="1618" y="247" font-size="13" fill="#000" textLength="48" lengthAdjust="spacingAndGlyphs" >Positive</text>
<circle cx="1606.5" cy="261.5" r="7.0" fill="#fafafa" stroke="#8e8f8f"/>
<circle cx="1606.5" cy="261.5" r="4.5" fill="url(#gRad)" opacity="0.8"/>
<text x="1618" y="267" font-size="13" fill="#000" textLength="55" lengthAdjust="spacingAndGlyphs" >Negative</text>
<text x="1602" y="288" font-size="10" fill="#000" font-family="Liberation Serif" font-weight="bold" textLength="43" lengthAdjust="spacingAndGlyphs" >Delta Th %</text>
<rect x="1602.5" y="293.5" width="49" height="23" fill="#f0f0f0" stroke="#c8d0d8"/>
<rect x="1603" y="294" width="48" height="1" fill="#e3e9ef" opacity="0.8"/>
<text x="1605" y="309.32" font-size="12" fill="#000" >8</text>
<rect x="1653.5" y="294.5" width="18" height="10.5" fill="#f0f0f0" stroke="#b8b8b8"/>
<path d="M1658.5,301.75 L1666.5,301.75 L1662.5,297.25 Z" fill="#4d6fb8"/>
<rect x="1653.5" y="306.0" width="18" height="10.5" fill="#f0f0f0" stroke="#b8b8b8"/>
<path d="M1658.5,309.25 L1666.5,309.25 L1662.5,313.75 Z" fill="#4d6fb8"/>
<rect x="1592.5" y="331.5" width="14" height="14" fill="#ffffff" stroke="#8e8f8f"/>
<rect x="1594.5" y="333.5" width="10" height="10" fill="url(#gChk)" stroke="#aeb3b9" stroke-opacity="0.7"/>
<path d="M1595.5,338.5 L1598.5,342 L1603.5,334.5" fill="none" stroke="#4a5f97" stroke-width="2.2"/>
<text x="1612" y="342" font-size="12" fill="#000" textLength="20" lengthAdjust="spacingAndGlyphs" >D/A</text>
<rect x="1592.5" y="350.5" width="14" height="14" fill="#ffffff" stroke="#8e8f8f"/>
<rect x="1594.5" y="352.5" width="10" height="10" fill="url(#gChk)" stroke="#aeb3b9" stroke-opacity="0.7"/>
<text x="1612" y="361" font-size="12" fill="#000" textLength="52" lengthAdjust="spacingAndGlyphs" >DCremoval</text>
<rect x="1592.5" y="369.5" width="14" height="14" fill="#ffffff" stroke="#8e8f8f"/>
<rect x="1594.5" y="371.5" width="10" height="10" fill="url(#gChk)" stroke="#aeb3b9" stroke-opacity="0.7"/>
<path d="M1595.5,376.5 L1598.5,380 L1603.5,372.5" fill="none" stroke="#4a5f97" stroke-width="2.2"/>
<text x="1612" y="380.5" font-size="13" fill="#000" textLength="40" lengthAdjust="spacingAndGlyphs" >Values</text>
<rect x="1691.5" y="71.5" width="13" height="417" rx="2" fill="url(#gMeterG)" stroke="#b0b0b0"/>
<rect x="1692" y="108" width="12" height="380" fill="url(#gMeter)"/>
<rect x="1544.5" y="485.5" width="18" height="18" rx="3" fill="url(#gBtn)" stroke="#707070"/>
<rect x="1545.5" y="486.5" width="16" height="16" rx="2" fill="none" stroke="#ffffff" stroke-opacity="0.6"/>
<text x="1553.5" y="498.82" font-size="12" fill="#000" text-anchor="middle" >0</text>
<text x="1704" y="504" font-size="13" fill="#000" text-anchor="end" textLength="46" lengthAdjust="spacingAndGlyphs" >-0.81dB</text>
<rect x="1722.5" y="59.5" width="180" height="458" rx="3" fill="none" stroke="#d5dfe5"/>
<rect x="1727" y="57" width="50.953125" height="5" fill="#f0f0f0"/>
<text x="1729" y="63.68" font-size="13" fill="#000" >Ch B(R)</text>
<text x="1723" y="79" font-size="13" fill="#909090" textLength="58" lengthAdjust="spacingAndGlyphs" >Vpos Trig</text>
<rect x="1735" y="85" width="5" height="389" fill="#e6e9ea"/>
<rect x="1735" y="85" width="1" height="389" fill="#a8a8a8"/>
<rect x="1758" y="85" width="5" height="389" fill="#e6e9ea"/>
<rect x="1758" y="85" width="1" height="389" fill="#a8a8a8"/>
<rect x="1754.5" y="84.5" width="9" height="5" rx="1" fill="#f4f4f4" stroke="#a0a0a0"/>
<rect x="1732.5" y="277.5" width="9" height="5" rx="1" fill="#f4f4f4" stroke="#a0a0a0"/>
<rect x="1791.5" y="71.5" width="19" height="15" rx="2" fill="#f4f4f4" stroke="#c0c0c0"/>
<text x="1801" y="84" font-size="12" fill="#909090" text-anchor="middle" >0</text>
<text x="1869" y="83" font-size="13" fill="#909090" text-anchor="end" textLength="30" lengthAdjust="spacingAndGlyphs" >ms/d</text>
<rect x="1790.5" y="89.5" width="59" height="21" fill="#f0f0f0" stroke="#c8d0d8"/>
<rect x="1791" y="90" width="58" height="1" fill="#e3e9ef" opacity="0.8"/>
<text x="1793" y="104.32" font-size="12" fill="#909090" >0.8840</text>
<rect x="1852.5" y="90.5" width="17" height="11.0" fill="#f0f0f0" stroke="#d5d5d5"/>
<path d="M1857.0,98.0 L1865.0,98.0 L1861.0,93.5 Z" fill="#c0c0c0"/>
<rect x="1852.5" y="102.5" width="17" height="11.0" fill="#f0f0f0" stroke="#d5d5d5"/>
<path d="M1857.0,106.0 L1865.0,106.0 L1861.0,110.5 Z" fill="#c0c0c0"/>
<text x="1791" y="136" font-size="13" fill="#909090" textLength="34" lengthAdjust="spacingAndGlyphs" >Zoom</text>
<text x="1781" y="152" font-size="11" fill="#909090" >x</text>
<rect x="1790.5" y="137.5" width="59" height="22" fill="#f0f0f0" stroke="#c8d0d8"/>
<rect x="1791" y="138" width="58" height="1" fill="#e3e9ef" opacity="0.8"/>
<text x="1793" y="152.82" font-size="12" fill="#909090" >1</text>
<rect x="1852.5" y="138.5" width="17" height="10.5" fill="#f0f0f0" stroke="#d5d5d5"/>
<path d="M1857.0,145.75 L1865.0,145.75 L1861.0,141.25 Z" fill="#c0c0c0"/>
<rect x="1852.5" y="150.0" width="17" height="10.5" fill="#f0f0f0" stroke="#d5d5d5"/>
<path d="M1857.0,153.25 L1865.0,153.25 L1861.0,157.75 Z" fill="#c0c0c0"/>
<rect x="1781.5" y="178.5" width="14" height="14" fill="#ffffff" stroke="#c5c5c5"/>
<rect x="1783.5" y="180.5" width="10" height="10" fill="url(#gChkD)" stroke="#e6e6e6" stroke-opacity="0.7"/>
<text x="1800" y="191" font-size="13" fill="#909090" textLength="24" lengthAdjust="spacingAndGlyphs" >Trig</text>
<rect x="1832.5" y="178.5" width="14" height="14" fill="#ffffff" stroke="#c5c5c5"/>
<rect x="1834.5" y="180.5" width="10" height="10" fill="url(#gChkD)" stroke="#e6e6e6" stroke-opacity="0.7"/>
<text x="1850" y="191" font-size="13" fill="#909090" textLength="19" lengthAdjust="spacingAndGlyphs" >Inv</text>
<rect x="1781.5" y="206.5" width="87" height="119" rx="3" fill="none" stroke="#d5dfe5"/>
<rect x="1786" y="204" width="44.703125" height="5" fill="#f0f0f0"/>
<text x="1788" y="210.68" font-size="13" fill="#000" >Trigger</text>
<text x="1800" y="229" font-size="13" fill="#909090" textLength="34" lengthAdjust="spacingAndGlyphs" >Slope</text>
<circle cx="1794.5" cy="241.5" r="7.0" fill="#fafafa" stroke="#c5c5c5"/>
<circle cx="1794.5" cy="241.5" r="4.5" fill="url(#gRadOnD)"/>
<text x="1806" y="247" font-size="13" fill="#909090" textLength="48" lengthAdjust="spacingAndGlyphs" >Positive</text>
<circle cx="1794.5" cy="261.5" r="7.0" fill="#fafafa" stroke="#c5c5c5"/>
<circle cx="1794.5" cy="261.5" r="4.5" fill="url(#gRad)" opacity="0.4"/>
<text x="1806" y="267" font-size="13" fill="#909090" textLength="55" lengthAdjust="spacingAndGlyphs" >Negative</text>
<text x="1790" y="288" font-size="10" fill="#909090" font-family="Liberation Serif" font-weight="bold" textLength="43" lengthAdjust="spacingAndGlyphs" >Delta Th %</text>
<rect x="1790.5" y="293.5" width="49" height="23" fill="#f0f0f0" stroke="#c8d0d8"/>
<rect x="1791" y="294" width="48" height="1" fill="#e3e9ef" opacity="0.8"/>
<text x="1793" y="309.32" font-size="12" fill="#909090" >25</text>
<rect x="1841.5" y="294.5" width="18" height="10.5" fill="#f0f0f0" stroke="#d5d5d5"/>
<path d="M1846.5,301.75 L1854.5,301.75 L1850.5,297.25 Z" fill="#c0c0c0"/>
<rect x="1841.5" y="306.0" width="18" height="10.5" fill="#f0f0f0" stroke="#d5d5d5"/>
<path d="M1846.5,309.25 L1854.5,309.25 L1850.5,313.75 Z" fill="#c0c0c0"/>
<rect x="1780.5" y="331.5" width="14" height="14" fill="#ffffff" stroke="#c5c5c5"/>
<rect x="1782.5" y="333.5" width="10" height="10" fill="url(#gChkD)" stroke="#e6e6e6" stroke-opacity="0.7"/>
<text x="1800" y="342" font-size="12" fill="#909090" textLength="20" lengthAdjust="spacingAndGlyphs" >D/A</text>
<rect x="1780.5" y="350.5" width="14" height="14" fill="#ffffff" stroke="#c5c5c5"/>
<rect x="1782.5" y="352.5" width="10" height="10" fill="url(#gChkD)" stroke="#e6e6e6" stroke-opacity="0.7"/>
<text x="1800" y="361" font-size="12" fill="#909090" textLength="52" lengthAdjust="spacingAndGlyphs" >DCremoval</text>
<rect x="1780.5" y="369.5" width="14" height="14" fill="#ffffff" stroke="#c5c5c5"/>
<rect x="1782.5" y="371.5" width="10" height="10" fill="url(#gChkD)" stroke="#e6e6e6" stroke-opacity="0.7"/>
<text x="1800" y="380.5" font-size="13" fill="#909090" textLength="44" lengthAdjust="spacingAndGlyphs" >Trig left</text>
<rect x="1780.5" y="388.5" width="14" height="14" fill="#ffffff" stroke="#c5c5c5"/>
<rect x="1782.5" y="390.5" width="10" height="10" fill="url(#gChkD)" stroke="#e6e6e6" stroke-opacity="0.7"/>
<text x="1800" y="399.5" font-size="13" fill="#909090" textLength="40" lengthAdjust="spacingAndGlyphs" >Values</text>
<rect x="1879.5" y="71.5" width="13" height="417" rx="2" fill="url(#gMeterG)" stroke="#b0b0b0"/>
<rect x="1732.5" y="485.5" width="18" height="18" rx="2" fill="#f4f4f4" stroke="#c0c0c0"/>
<text x="1741.5" y="500" font-size="12" fill="#909090" text-anchor="middle" >0</text>
<text x="1890" y="504" font-size="13" fill="#909090" text-anchor="end" textLength="38" lengthAdjust="spacingAndGlyphs" >-inf dB</text>
<rect x="10" y="527" width="52" height="459" fill="#808080" />
<rect x="62" y="527" width="1529" height="459" fill="#000000" />
<rect x="1591" y="527" width="51" height="459" fill="#00ff00" />
<rect x="10" y="986" width="1632" height="21" fill="#808080" />
<rect x="62" y="570" width="1529" height="1" fill="#5a5a5a"/>
<rect x="62" y="631" width="1529" height="1" fill="#5a5a5a"/>
<rect x="62" y="692" width="1529" height="1" fill="#5a5a5a"/>
<rect x="62" y="752" width="1529" height="1" fill="#5a5a5a"/>
<rect x="62" y="813" width="1529" height="1" fill="#5a5a5a"/>
<rect x="62" y="873" width="1529" height="1" fill="#5a5a5a"/>
<rect x="62" y="934" width="1529" height="1" fill="#5a5a5a"/>
<text x="58" y="572.5" font-size="10.5" fill="#d0d0d0" font-family="Liberation Serif" text-anchor="end" textLength="20" lengthAdjust="spacingAndGlyphs" >-18.0</text>
<text x="1593" y="572.5" font-size="10.5" fill="#000" font-family="Liberation Serif" textLength="20" lengthAdjust="spacingAndGlyphs" >-18.0</text>
<text x="58" y="633.5" font-size="10.5" fill="#d0d0d0" font-family="Liberation Serif" text-anchor="end" textLength="20" lengthAdjust="spacingAndGlyphs" >-24.0</text>
<text x="1593" y="633.5" font-size="10.5" fill="#000" font-family="Liberation Serif" textLength="20" lengthAdjust="spacingAndGlyphs" >-24.0</text>
<text x="58" y="694.5" font-size="10.5" fill="#d0d0d0" font-family="Liberation Serif" text-anchor="end" textLength="20" lengthAdjust="spacingAndGlyphs" >-30.0</text>
<text x="1593" y="694.5" font-size="10.5" fill="#000" font-family="Liberation Serif" textLength="20" lengthAdjust="spacingAndGlyphs" >-30.0</text>
<text x="58" y="754.5" font-size="10.5" fill="#d0d0d0" font-family="Liberation Serif" text-anchor="end" textLength="20" lengthAdjust="spacingAndGlyphs" >-36.0</text>
<text x="1593" y="754.5" font-size="10.5" fill="#000" font-family="Liberation Serif" textLength="20" lengthAdjust="spacingAndGlyphs" >-36.0</text>
<text x="58" y="815.5" font-size="10.5" fill="#d0d0d0" font-family="Liberation Serif" text-anchor="end" textLength="20" lengthAdjust="spacingAndGlyphs" >-42.0</text>
<text x="1593" y="815.5" font-size="10.5" fill="#000" font-family="Liberation Serif" textLength="20" lengthAdjust="spacingAndGlyphs" >-42.0</text>
<text x="58" y="875.5" font-size="10.5" fill="#d0d0d0" font-family="Liberation Serif" text-anchor="end" textLength="20" lengthAdjust="spacingAndGlyphs" >-48.0</text>
<text x="1593" y="875.5" font-size="10.5" fill="#000" font-family="Liberation Serif" textLength="20" lengthAdjust="spacingAndGlyphs" >-48.0</text>
<text x="58" y="936.5" font-size="10.5" fill="#d0d0d0" font-family="Liberation Serif" text-anchor="end" textLength="20" lengthAdjust="spacingAndGlyphs" >-54.0</text>
<text x="1593" y="936.5" font-size="10.5" fill="#000" font-family="Liberation Serif" textLength="20" lengthAdjust="spacingAndGlyphs" >-54.0</text>
<rect x="156" y="527" width="1" height="458" fill="#2a2a2a"/>
<rect x="211" y="527" width="1" height="458" fill="#2a2a2a"/>
<rect x="250" y="527" width="1" height="458" fill="#2a2a2a"/>
<rect x="281" y="527" width="1" height="458" fill="#2a2a2a"/>
<rect x="305" y="527" width="1" height="458" fill="#2a2a2a"/>
<rect x="326" y="527" width="1" height="458" fill="#2a2a2a"/>
<rect x="345" y="527" width="1" height="458" fill="#2a2a2a"/>
<rect x="361" y="527" width="1" height="458" fill="#2a2a2a"/>
<rect x="375" y="527" width="1" height="458" fill="#5a5a5a"/>
<rect x="469" y="527" width="1" height="458" fill="#2a2a2a"/>
<rect x="525" y="527" width="1" height="458" fill="#2a2a2a"/>
<rect x="564" y="527" width="1" height="458" fill="#2a2a2a"/>
<rect x="594" y="527" width="1" height="458" fill="#2a2a2a"/>
<rect x="619" y="527" width="1" height="458" fill="#2a2a2a"/>
<rect x="640" y="527" width="1" height="458" fill="#2a2a2a"/>
<rect x="658" y="527" width="1" height="458" fill="#2a2a2a"/>
<rect x="674" y="527" width="1" height="458" fill="#2a2a2a"/>
<rect x="689" y="527" width="1" height="458" fill="#5a5a5a"/>
<rect x="783" y="527" width="1" height="458" fill="#2a2a2a"/>
<rect x="838" y="527" width="1" height="458" fill="#2a2a2a"/>
<rect x="878" y="527" width="1" height="458" fill="#2a2a2a"/>
<rect x="908" y="527" width="1" height="458" fill="#2a2a2a"/>
<rect x="933" y="527" width="1" height="458" fill="#2a2a2a"/>
<rect x="954" y="527" width="1" height="458" fill="#2a2a2a"/>
<rect x="972" y="527" width="1" height="458" fill="#2a2a2a"/>
<rect x="988" y="527" width="1" height="458" fill="#2a2a2a"/>
<rect x="1002" y="527" width="1" height="458" fill="#5a5a5a"/>
<rect x="1097" y="527" width="1" height="458" fill="#2a2a2a"/>
<rect x="1152" y="527" width="1" height="458" fill="#2a2a2a"/>
<rect x="1191" y="527" width="1" height="458" fill="#2a2a2a"/>
<rect x="1222" y="527" width="1" height="458" fill="#2a2a2a"/>
<rect x="1246" y="527" width="1" height="458" fill="#2a2a2a"/>
<rect x="1267" y="527" width="1" height="458" fill="#2a2a2a"/>
<rect x="1286" y="527" width="1" height="458" fill="#2a2a2a"/>
<rect x="1302" y="527" width="1" height="458" fill="#2a2a2a"/>
<rect x="1316" y="527" width="1" height="458" fill="#5a5a5a"/>
<rect x="1410" y="527" width="1" height="458" fill="#2a2a2a"/>
<rect x="1466" y="527" width="1" height="458" fill="#2a2a2a"/>
<rect x="1505" y="527" width="1" height="458" fill="#2a2a2a"/>
<rect x="1535" y="527" width="1" height="458" fill="#2a2a2a"/>
<rect x="1560" y="527" width="1" height="458" fill="#2a2a2a"/>
<rect x="1581" y="527" width="1" height="458" fill="#2a2a2a"/>
<rect x="62" y="985" width="1529" height="1" fill="#00ff00"/>
<text x="156.254078739921" y="998" font-size="12" fill="#000" text-anchor="middle" >2</text>
<text x="211.48862396791648" y="998" font-size="12" fill="#000" text-anchor="middle" >3</text>
<text x="250.67815747984196" y="998" font-size="12" fill="#000" text-anchor="middle" >4</text>
<text x="281.07592126007904" y="998" font-size="12" fill="#000" text-anchor="middle" >5</text>
<text x="305.9127027078375" y="998" font-size="12" fill="#000" text-anchor="middle" >6</text>
<text x="326.9119022112719" y="998" font-size="12" fill="#000" text-anchor="middle" >7</text>
<text x="345.1022362197629" y="998" font-size="12" fill="#000" text-anchor="middle" >8</text>
<text x="375.5" y="998" font-size="12" fill="#000" font-weight="bold" text-anchor="middle" >10</text>
<text x="469.924078739921" y="998" font-size="12" fill="#000" text-anchor="middle" >20</text>
<text x="525.1586239679165" y="998" font-size="12" fill="#000" text-anchor="middle" >30</text>
<text x="564.348157479842" y="998" font-size="12" fill="#000" text-anchor="middle" >40</text>
<text x="594.7459212600791" y="998" font-size="12" fill="#000" text-anchor="middle" >50</text>
<text x="619.5827027078375" y="998" font-size="12" fill="#000" text-anchor="middle" >60</text>
<text x="640.581902211272" y="998" font-size="12" fill="#000" text-anchor="middle" >70</text>
<text x="658.7722362197629" y="998" font-size="12" fill="#000" text-anchor="middle" >80</text>
<text x="689.1700000000001" y="998" font-size="12" fill="#000" font-weight="bold" text-anchor="middle" >100</text>
<text x="783.5940787399211" y="998" font-size="12" fill="#000" text-anchor="middle" >200</text>
<text x="838.8286239679167" y="998" font-size="12" fill="#000" text-anchor="middle" >300</text>
<text x="878.0181574798421" y="998" font-size="12" fill="#000" text-anchor="middle" >400</text>
<text x="908.415921260079" y="998" font-size="12" fill="#000" text-anchor="middle" >500</text>
<text x="933.2527027078374" y="998" font-size="12" fill="#000" text-anchor="middle" >600</text>
<text x="972.442236219763" y="998" font-size="12" fill="#000" text-anchor="middle" >800</text>
<text x="1002.84" y="998" font-size="12" fill="#000" font-weight="bold" text-anchor="middle" >1k</text>
<text x="1097.264078739921" y="998" font-size="12" fill="#000" text-anchor="middle" >2k</text>
<text x="1152.4986239679165" y="998" font-size="12" fill="#000" text-anchor="middle" >3k</text>
<text x="1191.6881574798422" y="998" font-size="12" fill="#000" text-anchor="middle" >4k</text>
<text x="1222.085921260079" y="998" font-size="12" fill="#000" text-anchor="middle" >5k</text>
<text x="1246.9227027078377" y="998" font-size="12" fill="#000" text-anchor="middle" >6k</text>
<text x="1267.921902211272" y="998" font-size="12" fill="#000" text-anchor="middle" >7k</text>
<text x="1286.112236219763" y="998" font-size="12" fill="#000" text-anchor="middle" >8k</text>
<text x="1316.51" y="998" font-size="12" fill="#000" font-weight="bold" text-anchor="middle" >10k</text>
<text x="1410.934078739921" y="998" font-size="12" fill="#000" text-anchor="middle" >20k</text>
<text x="1466.1686239679166" y="998" font-size="12" fill="#000" text-anchor="middle" >30k</text>
<text x="1505.358157479842" y="998" font-size="12" fill="#000" text-anchor="middle" >40k</text>
<text x="1535.755921260079" y="998" font-size="12" fill="#000" text-anchor="middle" >50k</text>
<text x="1560.5927027078376" y="998" font-size="12" fill="#000" text-anchor="middle" >60k</text>
<text x="1627" y="998" font-size="13" fill="#0000ff" font-weight="bold" textLength="15" lengthAdjust="spacingAndGlyphs" >Hz</text>
<text x="11" y="536" font-size="10" fill="#0000ff" font-family="Liberation Serif" font-weight="bold" textLength="17" lengthAdjust="spacingAndGlyphs" >dBr</text>
<text x="1622" y="536" font-size="10" fill="#0000ff" font-family="Liberation Serif" font-weight="bold" textLength="17" lengthAdjust="spacingAndGlyphs" >dBr</text>
<rect x="1524" y="535" width="50" height="16" fill="#000" />
<text x="1526" y="548" font-size="13" fill="#00e0ff" textLength="45" lengthAdjust="spacingAndGlyphs" >0.00000</text>
<rect x="1221" y="836" width="1" height="149" fill="#00ff00"/>
<rect x="1222" y="911" width="1" height="74" fill="#00ff00"/>
<rect x="1316" y="814" width="1" height="171" fill="#00ff00"/>
<rect x="1371" y="781" width="1" height="204" fill="#00ff00"/>
<rect x="1410" y="527" width="1" height="458" fill="#00ff00"/>
<rect x="1441" y="801" width="1" height="184" fill="#00ff00"/>
<rect x="1465" y="870" width="1" height="115" fill="#00ff00"/>
<rect x="1466" y="968" width="1" height="17" fill="#00ff00"/>
<rect x="1486" y="936" width="1" height="49" fill="#00ff00"/>
<rect x="74" y="513" width="772" height="188" rx="6" fill="#000" opacity="0.55" filter="url(#fShadow)"/>
<rect x="78.5" y="519.5" width="760" height="177" rx="2" fill="#404040" stroke="#1a1a1a"/>
<rect x="79.5" y="520.5" width="758" height="175" rx="2" fill="url(#gDlgSide)" stroke="#e8e8e8"/>
<rect x="80" y="521" width="757" height="27" fill="url(#gDlgT)" />
<rect x="442" y="525" width="360" height="26" fill="url(#gDlgDark2)" filter="url(#fBlur)"/>
<text x="87" y="540" font-size="14" fill="#101828" textLength="347" lengthAdjust="spacingAndGlyphs" >Multifunction Counter [ Hz ] - ( spectrum peak value )</text>
<rect x="812.5" y="525.5" width="19" height="19" rx="2" fill="url(#gClose)" stroke="#6a3a30"/>
<path d="M817.5,530.5 L826.5,539.5 M826.5,530.5 L817.5,539.5" stroke="#2a3450" stroke-width="4.5"/>
<path d="M817.5,530.5 L826.5,539.5 M826.5,530.5 L817.5,539.5" stroke="#f4f4f4" stroke-width="2.5"/>
<rect x="83.5" y="547.5" width="750" height="143" fill="#f0f0f0" stroke="#e8e8e8"/>
<rect x="84.5" y="548.5" width="748" height="141" fill="#f0f0f0" stroke="#101010"/>
<rect x="85.5" y="549.5" width="746" height="139" fill="#f0f0f0" stroke="#ffffff"/>
<rect x="86" y="550" width="110" height="114" fill="#f0f0f0" />
<text x="92" y="564" font-size="13" fill="#000" textLength="48" lengthAdjust="spacingAndGlyphs" >Resolut.</text>
<rect x="150.5" y="551.5" width="14" height="14" fill="#ffffff" stroke="#c5c5c5"/>
<rect x="152.5" y="553.5" width="10" height="10" fill="url(#gChkD)" stroke="#e6e6e6" stroke-opacity="0.7"/>
<text x="169" y="564" font-size="13" fill="#a0a0a0" >Hi</text>
<rect x="92.5" y="571.5" width="95" height="22" rx="3" fill="url(#gBtn)" stroke="#707070"/>
<rect x="93.5" y="572.5" width="93" height="20" rx="2" fill="none" stroke="#ffffff" stroke-opacity="0.6"/>
<text x="97" y="587.18" font-size="13" fill="#000" textLength="33" lengthAdjust="spacingAndGlyphs" >4.6 Hz</text>
<path d="M169,579.5 L181,579.5 L175,586.0 Z" fill="#000"/>
<text x="92" y="614" font-size="13" fill="#000" textLength="98" lengthAdjust="spacingAndGlyphs" >%Power of peak</text>
<rect x="91.5" y="617.5" width="96" height="24" fill="#ffffff" stroke="#dde3ea"/>
<text x="94" y="634" font-size="13" fill="#000" textLength="32" lengthAdjust="spacingAndGlyphs" >10.00</text>
<rect x="196" y="550" width="612" height="114" fill="#000000" />
<rect x="196" y="550" width="21" height="21" fill="#ff0000" />
<text x="299" y="647" font-size="116" fill="#00ff00" textLength="409" lengthAdjust="spacingAndGlyphs" >19967.7</text>
<rect x="808" y="550" width="22" height="114" fill="#f4f4f4"/>
<rect x="809" y="551" width="20" height="112" rx="1" fill="#d8d8d8"/>
<rect x="821" y="551" width="8" height="10" fill="#c4c4c4"/>
<rect x="809" y="561" width="20" height="103" fill="url(#gLvl)" />
<rect x="86" y="664" width="722" height="1" fill="#a0a0a0"/>
<rect x="86" y="665" width="722" height="1" fill="#ffffff"/>
<circle cx="93.5" cy="675.5" r="7.0" fill="#fafafa" stroke="#8e8f8f"/>
<circle cx="93.5" cy="675.5" r="4.5" fill="url(#gRadOn)"/>
<text x="104" y="680" font-size="13" fill="#000" textLength="102" lengthAdjust="spacingAndGlyphs" >Frequency meter</text>
<circle cx="221.5" cy="675.5" r="7.0" fill="#fafafa" stroke="#8e8f8f"/>
<circle cx="221.5" cy="675.5" r="4.5" fill="url(#gRad)" opacity="0.8"/>
<text x="233" y="680" font-size="13" fill="#000" textLength="77" lengthAdjust="spacingAndGlyphs" >Periodimeter</text>
<circle cx="329.5" cy="675.5" r="7.0" fill="#fafafa" stroke="#8e8f8f"/>
<circle cx="329.5" cy="675.5" r="4.5" fill="url(#gRad)" opacity="0.8"/>
<text x="341" y="680" font-size="13" fill="#000" textLength="46" lengthAdjust="spacingAndGlyphs" >Counter</text>
<rect x="421.5" y="668.5" width="14" height="14" fill="#ffffff" stroke="#8e8f8f"/>
<rect x="423.5" y="670.5" width="10" height="10" fill="url(#gChk)" stroke="#aeb3b9" stroke-opacity="0.7"/>
<text x="440" y="680" font-size="13" fill="#000" textLength="28" lengthAdjust="spacingAndGlyphs" >Hold</text>
<rect x="491.5" y="668.5" width="14" height="14" fill="#ffffff" stroke="#8e8f8f"/>
<rect x="493.5" y="670.5" width="10" height="10" fill="url(#gChk)" stroke="#aeb3b9" stroke-opacity="0.7"/>
<text x="510" y="680" font-size="13" fill="#000" textLength="19" lengthAdjust="spacingAndGlyphs" >UC</text>
<rect x="551.5" y="668.5" width="14" height="14" fill="#ffffff" stroke="#8e8f8f"/>
<rect x="553.5" y="670.5" width="10" height="10" fill="url(#gChk)" stroke="#aeb3b9" stroke-opacity="0.7"/>
<text x="570" y="680" font-size="13" fill="#000" textLength="88" lengthAdjust="spacingAndGlyphs" >Statistic UC (A)</text>
<rect x="757.5" y="666.5" width="67" height="20" rx="3" fill="url(#gBtn)" stroke="#707070"/>
<rect x="758.5" y="667.5" width="65" height="18" rx="2" fill="none" stroke="#ffffff" stroke-opacity="0.6"/>
<text x="791.0" y="681.54" font-size="14" fill="#000" font-weight="bold" text-anchor="middle" >HELP</text>
<rect x="1649.5" y="546.5" width="265" height="406" fill="#ffffff" stroke="#898c95"/>
<rect x="1706.5" y="526.5" width="52" height="21" fill="url(#gTab)" stroke="#898c95"/>
<text x="1711" y="542" font-size="13" fill="#000" textLength="33" lengthAdjust="spacingAndGlyphs" >More</text>
<rect x="1759.5" y="526.5" width="53" height="21" fill="url(#gTab)" stroke="#898c95"/>
<text x="1764" y="542" font-size="13" fill="#000" textLength="35" lengthAdjust="spacingAndGlyphs" >Cepst</text>
<rect x="1813.5" y="526.5" width="53" height="21" fill="url(#gTab)" stroke="#898c95"/>
<text x="1818" y="542" font-size="13" fill="#000" textLength="26" lengthAdjust="spacingAndGlyphs" >THD</text>
<rect x="1867.5" y="526.5" width="17" height="21" fill="url(#gTab)" stroke="#898c95"/>
<text x="1872" y="542" font-size="13" fill="#000" textLength="8" lengthAdjust="spacingAndGlyphs" >U</text>
<rect x="1649.5" y="524.5" width="57" height="23" fill="#ffffff" stroke="#898c95"/>
<rect x="1650" y="546" width="56" height="2" fill="#ffffff" />
<text x="1657" y="540" font-size="13" fill="#000" textLength="29" lengthAdjust="spacingAndGlyphs" >Main</text>
<rect x="1877" y="525" width="43" height="21" fill="#f0f0f0" />
<rect x="1878.5" y="526.5" width="17" height="17" fill="url(#gBtn)" stroke="#a0a0a0"/>
<rect x="1897.5" y="526.5" width="17" height="17" fill="url(#gBtn)" stroke="#a0a0a0"/>
<path d="M1884,535 L1889,530.5 L1889,539.5 Z" fill="#4a60c0"/>
<path d="M1909,535 L1904,530.5 L1904,539.5 Z" fill="#4a60c0"/>
<rect x="1654.5" y="551.5" width="137" height="183" rx="3" fill="none" stroke="#d5dfe5"/>
<rect x="1663.5" y="557.5" width="14" height="14" fill="#ffffff" stroke="#8e8f8f"/>
<rect x="1665.5" y="559.5" width="10" height="10" fill="url(#gChk)" stroke="#aeb3b9" stroke-opacity="0.7"/>
<text x="1682" y="570" font-size="13" fill="#000" textLength="66" lengthAdjust="spacingAndGlyphs" >Stay on top</text>
<rect x="1663.5" y="576.5" width="14" height="14" fill="#ffffff" stroke="#8e8f8f"/>
<rect x="1665.5" y="578.5" width="10" height="10" fill="url(#gChk)" stroke="#aeb3b9" stroke-opacity="0.7"/>
<text x="1682" y="589" font-size="13" fill="#000" textLength="59" lengthAdjust="spacingAndGlyphs" >Volt meter</text>
<rect x="1663.5" y="596.5" width="14" height="14" fill="#ffffff" stroke="#8e8f8f"/>
<rect x="1665.5" y="598.5" width="10" height="10" fill="url(#gChk)" stroke="#aeb3b9" stroke-opacity="0.7"/>
<path d="M1666.5,603.5 L1669.5,607 L1674.5,599.5" fill="none" stroke="#4a5f97" stroke-width="2.2"/>
<text x="1682" y="609" font-size="13" fill="#000" textLength="67" lengthAdjust="spacingAndGlyphs" >Freq. meter</text>
<rect x="1663.5" y="616.5" width="14" height="14" fill="#ffffff" stroke="#8e8f8f"/>
<rect x="1665.5" y="618.5" width="10" height="10" fill="url(#gChk)" stroke="#aeb3b9" stroke-opacity="0.7"/>
<text x="1682" y="629" font-size="13" fill="#000" textLength="96" lengthAdjust="spacingAndGlyphs" >Wave Gen./Rec</text>
<rect x="1663.5" y="636.5" width="14" height="14" fill="#ffffff" stroke="#8e8f8f"/>
<rect x="1665.5" y="638.5" width="10" height="10" fill="url(#gChk)" stroke="#aeb3b9" stroke-opacity="0.7"/>
<text x="1682" y="649" font-size="13" fill="#000" textLength="38" lengthAdjust="spacingAndGlyphs" >Phase</text>
<rect x="1663.5" y="654.5" width="14" height="14" fill="#ffffff" stroke="#8e8f8f"/>
<rect x="1665.5" y="656.5" width="10" height="10" fill="url(#gChk)" stroke="#aeb3b9" stroke-opacity="0.7"/>
<text x="1682" y="667" font-size="13" fill="#000" textLength="59" lengthAdjust="spacingAndGlyphs" >THD view</text>
<rect x="1663.5" y="674.5" width="14" height="14" fill="#ffffff" stroke="#8e8f8f"/>
<rect x="1665.5" y="676.5" width="10" height="10" fill="url(#gChk)" stroke="#aeb3b9" stroke-opacity="0.7"/>
<text x="1682" y="687" font-size="13" fill="#000" textLength="102" lengthAdjust="spacingAndGlyphs" >THD+Noise view</text>
<rect x="1663.5" y="694.5" width="14" height="14" fill="#ffffff" stroke="#8e8f8f"/>
<rect x="1665.5" y="696.5" width="10" height="10" fill="url(#gChk)" stroke="#aeb3b9" stroke-opacity="0.7"/>
<text x="1682" y="707" font-size="13" fill="#000" textLength="71" lengthAdjust="spacingAndGlyphs" >ZRLC meter</text>
<rect x="1663.5" y="714.5" width="14" height="14" fill="#ffffff" stroke="#8e8f8f"/>
<rect x="1665.5" y="716.5" width="10" height="10" fill="url(#gChk)" stroke="#aeb3b9" stroke-opacity="0.7"/>
<text x="1682" y="727" font-size="13" fill="#000" textLength="88" lengthAdjust="spacingAndGlyphs" >Fast Rec./Play</text>
<rect x="1803.5" y="558.5" width="105" height="19" rx="3" fill="url(#gBtn)" stroke="#707070"/>
<rect x="1804.5" y="559.5" width="103" height="17" rx="2" fill="none" stroke="#ffffff" stroke-opacity="0.6"/>
<text x="1856.0" y="572.68" font-size="13" fill="#000" text-anchor="middle" textLength="87" lengthAdjust="spacingAndGlyphs" >Capture scope</text>
<rect x="1803.5" y="581.5" width="105" height="19" rx="3" fill="url(#gBtn)" stroke="#707070"/>
<rect x="1804.5" y="582.5" width="103" height="17" rx="2" fill="none" stroke="#ffffff" stroke-opacity="0.6"/>
<text x="1856.0" y="595.68" font-size="13" fill="#000" text-anchor="middle" textLength="104" lengthAdjust="spacingAndGlyphs" >Capture spectrum</text>
<rect x="1800.5" y="604.5" width="70" height="19" rx="3" fill="url(#gBtn)" stroke="#707070"/>
<rect x="1801.5" y="605.5" width="68" height="17" rx="2" fill="none" stroke="#ffffff" stroke-opacity="0.6"/>
<text x="1835.5" y="618.68" font-size="13" fill="#000" text-anchor="middle" textLength="48" lengthAdjust="spacingAndGlyphs" >WaveOn</text>
<rect x="1876.5" y="604.5" width="32" height="19" rx="3" fill="url(#gBtn)" stroke="#707070"/>
<rect x="1877.5" y="605.5" width="30" height="17" rx="2" fill="none" stroke="#ffffff" stroke-opacity="0.6"/>
<text x="1892.5" y="618.68" font-size="13" fill="#000" text-anchor="middle" textLength="22" lengthAdjust="spacingAndGlyphs" >Info</text>
<rect x="1802.5" y="631.5" width="108" height="103" rx="3" fill="none" stroke="#d5dfe5"/>
<text x="1822" y="658" font-size="13" fill="#000" >wait</text>
<rect x="1860.5" y="642.5" width="40" height="23" fill="#f0f0f0" stroke="#d0d8e0"/>
<rect x="1861" y="643" width="39" height="1" fill="#e3e9ef" opacity="0.8"/>
<text x="1863" y="658.68" font-size="13" fill="#000" >171</text>
<text x="1822" y="687" font-size="13" fill="#000" >req.</text>
<rect x="1860.5" y="671.5" width="40" height="23" fill="#f0f0f0" stroke="#d0d8e0"/>
<rect x="1861" y="672" width="39" height="1" fill="#e3e9ef" opacity="0.8"/>
<text x="1863" y="687.68" font-size="13" fill="#000" >0</text>
<text x="1822" y="715" font-size="13" fill="#000" >used</text>
<rect x="1860.5" y="699.5" width="40" height="23" fill="#f0f0f0" stroke="#d0d8e0"/>
<rect x="1861" y="700" width="39" height="1" fill="#e3e9ef" opacity="0.8"/>
<text x="1863" y="715.68" font-size="13" fill="#000" >47</text>
<rect x="1654.5" y="744.5" width="137" height="187" rx="3" fill="none" stroke="#d5dfe5"/>
<rect x="1659" y="742" width="47" height="5" fill="#f0f0f0"/>
<text x="1661" y="748.68" font-size="13" fill="#000" textLength="43" lengthAdjust="spacingAndGlyphs" >Y - axis</text>
<rect x="1676.5" y="762.5" width="7" height="135" fill="#e7eaea" stroke="#d0d0d0"/>
<rect x="1669" y="765" width="4" height="1" fill="#b0b0b0"/>
<rect x="1689" y="765" width="4" height="1" fill="#b0b0b0"/>
<rect x="1669" y="782" width="4" height="1" fill="#b0b0b0"/>
<rect x="1689" y="782" width="4" height="1" fill="#b0b0b0"/>
<rect x="1669" y="799" width="4" height="1" fill="#b0b0b0"/>
<rect x="1689" y="799" width="4" height="1" fill="#b0b0b0"/>
<rect x="1669" y="816" width="4" height="1" fill="#b0b0b0"/>
<rect x="1689" y="816" width="4" height="1" fill="#b0b0b0"/>
<rect x="1669" y="833" width="4" height="1" fill="#b0b0b0"/>
<rect x="1689" y="833" width="4" height="1" fill="#b0b0b0"/>
<rect x="1669" y="850" width="4" height="1" fill="#b0b0b0"/>
<rect x="1689" y="850" width="4" height="1" fill="#b0b0b0"/>
<rect x="1669" y="867" width="4" height="1" fill="#b0b0b0"/>
<rect x="1689" y="867" width="4" height="1" fill="#b0b0b0"/>
<rect x="1669" y="884" width="4" height="1" fill="#b0b0b0"/>
<rect x="1689" y="884" width="4" height="1" fill="#b0b0b0"/>
<rect x="1669" y="901" width="4" height="1" fill="#b0b0b0"/>
<rect x="1689" y="901" width="4" height="1" fill="#b0b0b0"/>
<rect x="1672.5" y="849.5" width="14" height="6" rx="2" fill="#f0f0f0" stroke="#909090"/>
<rect x="1722.5" y="752.5" width="14" height="14" fill="#ffffff" stroke="#8e8f8f"/>
<rect x="1724.5" y="754.5" width="10" height="10" fill="url(#gChk)" stroke="#aeb3b9" stroke-opacity="0.7"/>
<path d="M1725.5,759.5 L1728.5,763 L1733.5,755.5" fill="none" stroke="#4a5f97" stroke-width="2.2"/>
<text x="1741" y="766" font-size="13" fill="#000" textLength="22" lengthAdjust="spacingAndGlyphs" >Log</text>
<rect x="1722.5" y="775.5" width="14" height="14" fill="#ffffff" stroke="#8e8f8f"/>
<rect x="1724.5" y="777.5" width="10" height="10" fill="url(#gChk)" stroke="#aeb3b9" stroke-opacity="0.7"/>
<text x="1741" y="789" font-size="13" fill="#000" textLength="28" lengthAdjust="spacingAndGlyphs" >Hold</text>
<rect x="1722.5" y="798.5" width="14" height="14" fill="#ffffff" stroke="#c5c5c5"/>
<rect x="1724.5" y="800.5" width="10" height="10" fill="url(#gChkD)" stroke="#e6e6e6" stroke-opacity="0.7"/>
<path d="M1725.5,805.5 L1728.5,809 L1733.5,801.5" fill="none" stroke="#c0c0c0" stroke-width="2.2"/>
<text x="1741" y="812" font-size="13" fill="#a0a0a0" textLength="31" lengthAdjust="spacingAndGlyphs" >Lines</text>
<rect x="1722.5" y="819.5" width="14" height="14" fill="#ffffff" stroke="#8e8f8f"/>
<rect x="1724.5" y="821.5" width="10" height="10" fill="url(#gChk)" stroke="#aeb3b9" stroke-opacity="0.7"/>
<text x="1741" y="833" font-size="13" fill="#000" textLength="22" lengthAdjust="spacingAndGlyphs" >Info</text>
<text x="1712" y="851" font-size="13" fill="#000" textLength="51" lengthAdjust="spacingAndGlyphs" >Average</text>
<rect x="1712.5" y="855.5" width="69" height="22" rx="3" fill="url(#gBtn)" stroke="#707070"/>
<rect x="1713.5" y="856.5" width="67" height="20" rx="2" fill="none" stroke="#ffffff" stroke-opacity="0.6"/>
<text x="1717" y="871.18" font-size="13" fill="#000" >1</text>
<path d="M1763,863.5 L1775,863.5 L1769,870.0 Z" fill="#000"/>
<text x="1712" y="894" font-size="13" fill="#000" textLength="27" lengthAdjust="spacingAndGlyphs" >Step</text>
<rect x="1712.5" y="899.5" width="69" height="22" rx="3" fill="url(#gBtn)" stroke="#707070"/>
<rect x="1713.5" y="900.5" width="67" height="20" rx="2" fill="none" stroke="#ffffff" stroke-opacity="0.6"/>
<text x="1717" y="915.18" font-size="13" fill="#000" textLength="27" lengthAdjust="spacingAndGlyphs" >6 dB</text>
<path d="M1763,907.5 L1775,907.5 L1769,914.0 Z" fill="#000"/>
<rect x="1664.5" y="907.5" width="37" height="16" rx="3" fill="url(#gBtn)" stroke="#707070"/>
<rect x="1665.5" y="908.5" width="35" height="14" rx="2" fill="none" stroke="#ffffff" stroke-opacity="0.6"/>
<text x="1683.0" y="920.18" font-size="13" fill="#000" text-anchor="middle" textLength="29" lengthAdjust="spacingAndGlyphs" >Auto</text>
<rect x="1802.5" y="744.5" width="108" height="121" rx="3" fill="none" stroke="#d5dfe5"/>
<rect x="1806" y="742" width="47" height="5" fill="#f0f0f0"/>
<text x="1808" y="748.68" font-size="13" fill="#000" textLength="43" lengthAdjust="spacingAndGlyphs" >X - axis</text>
<rect x="1811.5" y="755.5" width="14" height="14" fill="#ffffff" stroke="#8e8f8f"/>
<rect x="1813.5" y="757.5" width="10" height="10" fill="url(#gChk)" stroke="#aeb3b9" stroke-opacity="0.7"/>
<path d="M1814.5,762.5 L1817.5,766 L1822.5,758.5" fill="none" stroke="#4a5f97" stroke-width="2.2"/>
<text x="1830" y="769" font-size="13" fill="#000" textLength="22" lengthAdjust="spacingAndGlyphs" >Log</text>
<rect x="1866.5" y="755.5" width="14" height="14" fill="#ffffff" stroke="#8e8f8f"/>
<rect x="1868.5" y="757.5" width="10" height="10" fill="url(#gChk)" stroke="#aeb3b9" stroke-opacity="0.7"/>
<text x="1885" y="769" font-size="13" fill="#000" textLength="16" lengthAdjust="spacingAndGlyphs" >3D</text>
<rect x="1811.5" y="777.5" width="14" height="14" fill="#ffffff" stroke="#c5c5c5"/>
<rect x="1813.5" y="779.5" width="10" height="10" fill="url(#gChkD)" stroke="#e6e6e6" stroke-opacity="0.7"/>
<text x="1830" y="791" font-size="13" fill="#a0a0a0" textLength="34" lengthAdjust="spacingAndGlyphs" >true X</text>
<rect x="1811.5" y="797.5" width="89" height="22" rx="3" fill="url(#gBtn)" stroke="#707070"/>
<rect x="1812.5" y="798.5" width="87" height="20" rx="2" fill="none" stroke="#ffffff" stroke-opacity="0.6"/>
<text x="1816" y="813.18" font-size="13" fill="#000" textLength="57" lengthAdjust="spacingAndGlyphs" >Fit screen</text>
<path d="M1882,805.5 L1894,805.5 L1888,812.0 Z" fill="#000"/>
<rect x="1811.5" y="831.5" width="89" height="22" rx="3" fill="#f4f4f4" stroke="#c8c8c8"/>
<text x="1816" y="847.18" font-size="13" fill="#a0a0a0" textLength="16" lengthAdjust="spacingAndGlyphs" >1/1</text>
<path d="M1882,839.5 L1894,839.5 L1888,846.0 Z" fill="#a0a0a0"/>
<rect x="1802.5" y="878.5" width="108" height="50" rx="3" fill="none" stroke="#d5dfe5"/>
<rect x="1807" y="876" width="66" height="5" fill="#f0f0f0"/>
<text x="1809" y="882.68" font-size="13" fill="#000" textLength="62" lengthAdjust="spacingAndGlyphs" >Channel(s)</text>
<rect x="1811.5" y="894.5" width="89" height="22" rx="3" fill="url(#gBtn)" stroke="#707070"/>
<rect x="1812.5" y="895.5" width="87" height="20" rx="2" fill="none" stroke="#ffffff" stroke-opacity="0.6"/>
<text x="1816" y="910.18" font-size="13" fill="#000" textLength="9" lengthAdjust="spacingAndGlyphs" >A</text>
<path d="M1882,902.5 L1894,902.5 L1888,909.0 Z" fill="#000"/>
<rect x="1" y="1010" width="1919" height="1" fill="#a0a0a0"/>
<rect x="1" y="1011" width="1919" height="20" fill="#f0edeb" />
<rect x="0" y="1031" width="1920" height="1" fill="#ffffff"/>
<rect x="0" y="1032" width="1920" height="1" fill="#3a3a3a"/>
<text x="3" y="1027" font-size="14" fill="#000" font-style="italic" textLength="107" lengthAdjust="spacingAndGlyphs" >[Points = 32768]</text>
<text x="119.5" y="1027" font-size="14" fill="#000" font-style="italic" textLength="152.5" lengthAdjust="spacingAndGlyphs" >[Sampling = 150000Hz]</text>
<text x="281" y="1027" font-size="14" fill="#000" font-style="italic" textLength="151" lengthAdjust="spacingAndGlyphs" >[Smoothing = Hanning]</text>
<text x="441" y="1027" font-size="14" fill="#000" font-style="italic" textLength="334" lengthAdjust="spacingAndGlyphs" >[Ini = C:\Program Files (x86)\Visual Analyser\VA.ini]</text>
<text x="782.5" y="1027" font-size="14" fill="#000" font-style="italic" textLength="311.5" lengthAdjust="spacingAndGlyphs" >[UID = 9E82FBF60AF4DDFEFD6F22568A4EE6CE]</text>
<rect x="0" y="1033" width="1920" height="47" fill="url(#gTask)" />
<rect x="0" y="1033" width="1920" height="47" fill="url(#gTaskV)" />
<rect x="0" y="1033" width="1920" height="1" fill="#505058"/>
<g clip-path="url(#cTask)"><g filter="url(#fBlur2)" opacity="0.55"><ellipse cx="700" cy="1050" rx="40" ry="8" fill="#6a5030"/><ellipse cx="1200" cy="1052" rx="60" ry="12" fill="#5a4428"/><ellipse cx="1270" cy="1045" rx="20" ry="10" fill="#6a5030"/><ellipse cx="460" cy="1062" rx="50" ry="10" fill="#6a5a66"/></g></g>
<circle cx="33" cy="1056" r="21.5" fill="url(#gOrb)" stroke="#c8d4e0" stroke-width="1.2"/>
<ellipse cx="33" cy="1072" rx="12" ry="5" fill="#20d0f0" opacity="0.6"/>
<path d="M23,1046 q5,-3 11,0 l-1.5,8 q-5,-3 -11,0 z" fill="#e85a18"/>
<path d="M35,1046.5 q5,3 11,0 l-1.8,8.5 q-5,3 -11,0 z" fill="#78b830"/>
<path d="M20.5,1056 q5,-3 11,0 l-1.5,9 q-5,-3 -11,0 z" fill="#2898e0"/>
<path d="M32.5,1056.5 q5,3 11,0 l-1.8,9 q-5,3 -11,0 z" fill="#f8c020"/>
<ellipse cx="33" cy="1046" rx="16" ry="9" fill="#ffffff" opacity="0.2"/>
<path d="M87,1040 l10,0 l2,2 l20,0 l0,4 l-32,0 z" fill="#e8d080"/>
<rect x="91" y="1039" width="12" height="5" fill="#ffffff"/>
<rect x="98" y="1041" width="12" height="5" fill="#ffffff"/>
<rect x="108" y="1043" width="12" height="5" fill="#ffffff"/>
<rect x="92" y="1039" width="2" height="3" fill="#20a040" />
<rect x="100" y="1041" width="2" height="2" fill="#e03020" />
<rect x="111" y="1043" width="2" height="2" fill="#2070d0" />
<rect x="86" y="1045" width="39" height="29" rx="1.5" fill="url(#gFold)" stroke="#c8a848" stroke-width="0.8"/>
<path d="M91,1075 l0,-12 q0,-3 3,-3 l25,0 q3,0 3,3 l0,12 l-7,0 l0,-5 l-17,0 l0,5 z" fill="url(#gFoldB)" stroke="#4890c8" stroke-width="0.8"/>
<rect x="99" y="1069" width="14" height="3" fill="#e8c860" />
<rect x="163" y="1043" width="27" height="30" rx="1" fill="#5aa8e0"/>
<rect x="160" y="1042" width="27" height="30" rx="1" fill="#78c0ec" stroke="#4a98d0" stroke-width="0.8"/>
<rect x="157" y="1041" width="28" height="31" rx="1" fill="#a8d8f4" stroke="#5aa8e0" stroke-width="0.8"/>
<circle cx="170" cy="1056" r="10.5" fill="#f07818" stroke="#d86010" stroke-width="0.8"/>
<path d="M166,1050 L176,1056 L166,1063 Z" fill="#ffffff"/>
<rect x="226.5" y="1037.5" width="35" height="30" fill="#f8f8f8" stroke="#c8c8d0"/>
<rect x="230" y="1043" width="15" height="20" fill="url(#gWin)" stroke="#d0d8e0" stroke-width="0.8"/>
<rect x="248" y="1044.0" width="7" height="1.2" fill="#b8b8b8" />
<rect x="248" y="1047.2" width="7" height="1.2" fill="#b8b8b8" />
<rect x="248" y="1050.4" width="7" height="1.2" fill="#b8b8b8" />
<rect x="248" y="1053.6" width="7" height="1.2" fill="#b8b8b8" />
<rect x="248" y="1056.8" width="7" height="1.2" fill="#b8b8b8" />
<rect x="248" y="1060.0" width="7" height="1.2" fill="#b8b8b8" />
<rect x="257" y="1043" width="3" height="12" fill="#58a070" />
<rect x="282.5" y="1034.5" width="65" height="44" rx="3" fill="url(#gTB1)" stroke="#302838" stroke-opacity="0.6"/>
<rect x="283.5" y="1035.5" width="63" height="42" rx="2" fill="none" stroke="#ffffff" stroke-opacity="0.35"/>
<rect x="352.5" y="1034.5" width="65" height="44" rx="3" fill="url(#gTB2)" stroke="#302838" stroke-opacity="0.6"/>
<rect x="353.5" y="1035.5" width="63" height="42" rx="2" fill="none" stroke="#ffffff" stroke-opacity="0.5"/>
<path d="M297,1049 l6,-2 l0,24 l-6,2 z" fill="#e8e8e8" stroke="#b0b0b0" stroke-width="0.6"/>
<path d="M305,1040 l27,3 l0,20 l-27,-3 z" fill="#1a1a1a" stroke="#e0e0e0" stroke-width="1.5"/>
<path d="M307,1052 l4,-6 l4,8 l4,-6 l4,7 l4,-4 l4,2" stroke="#30d040" fill="none" stroke-width="1.2"/>
<path d="M307,1046 l23,3 M307,1056 l23,3" stroke="#208030" stroke-width="0.8"/>
<ellipse cx="318" cy="1068" rx="8" ry="3.5" fill="#e0e0e0" stroke="#b8b8b8" stroke-width="0.6"/>
<rect x="365" y="1036" width="40" height="40" fill="#c8bccc" opacity="0.5"/>
<rect x="365" y="1036" width="1" height="40" fill="#00e000"/>
<rect x="365" y="1036" width="40" height="1" fill="#00e000"/>
<rect x="370" y="1036" width="1" height="40" fill="#00e000"/>
<rect x="365" y="1041" width="40" height="1" fill="#00e000"/>
<rect x="375" y="1036" width="1" height="40" fill="#00e000"/>
<rect x="365" y="1046" width="40" height="1" fill="#00e000"/>
<rect x="380" y="1036" width="1" height="40" fill="#00e000"/>
<rect x="365" y="1051" width="40" height="1" fill="#00e000"/>
<rect x="385" y="1036" width="1" height="40" fill="#00e000"/>
<rect x="365" y="1056" width="40" height="1" fill="#00e000"/>
<rect x="390" y="1036" width="1" height="40" fill="#00e000"/>
<rect x="365" y="1061" width="40" height="1" fill="#00e000"/>
<rect x="395" y="1036" width="1" height="40" fill="#00e000"/>
<rect x="365" y="1066" width="40" height="1" fill="#00e000"/>
<rect x="400" y="1036" width="1" height="40" fill="#00e000"/>
<rect x="365" y="1071" width="40" height="1" fill="#00e000"/>
<rect x="405" y="1036" width="1" height="40" fill="#00e000"/>
<rect x="365" y="1076" width="40" height="1" fill="#00e000"/>
<path d="M365,1060 l6,0 l2,-2 l2,-5 l2,-10 l2,-1 l11,0 l2,10 l3,7 l5,1 l5,2" stroke="#f0f000" fill="none" stroke-width="1.2"/>
<path d="M366,1064 l8,0 l2,1 l10,0 l2,-1 l0,4 l16,0 M366,1069 l9,0 l0,5 l13,0 l0,-2 l16,0" stroke="#c80000" fill="none" stroke-width="1.8"/>
<path d="M397,1040 q4,-2 5,2 q-4,1 -2,4 q-4,1 -5,-2 q3,-1 2,-4z" fill="#f02020"/>
<path d="M1670,1062 L1676,1056 L1682,1062 Z" fill="#e8e8f0"/>
<rect x="1700.5" y="1048.5" width="9" height="16" rx="1" fill="none" stroke="#f0f0f0" stroke-width="1.6"/>
<rect x="1709" y="1052" width="6" height="8" fill="#f0f0f0"/>
<path d="M1712,1060 l0,6" stroke="#f0f0f0" stroke-width="2"/>
<path d="M1731,1047 l0,20 M1731,1048 l10,0 l3,3 l-3,3 l-10,0" stroke="#f0f0f0" fill="#f0f0f0" stroke-width="1.5"/>
<path d="M1760,1052 l4,0 l6,-5 l0,18 l-6,-5 l-4,0 z" fill="#f0f0f0"/>
<path d="M1774,1051 q3,5 0,10 M1777,1049 q4,7 0,14" stroke="#f0f0f0" fill="none" stroke-width="1.2"/>
<rect x="1792.0" y="1064" width="2.5" height="3" fill="#f0f0f0" />
<rect x="1795.5" y="1061" width="2.5" height="6" fill="#f0f0f0" />
<rect x="1799.0" y="1058" width="2.5" height="9" fill="#f0f0f0" />
<rect x="1802.5" y="1055" width="2.5" height="12" fill="#f0f0f0" />
<rect x="1806.0" y="1052" width="2.5" height="15" fill="#f0f0f0" />
<text x="1861" y="1053" font-size="15" fill="#f4f4f4" text-anchor="middle" textLength="52" lengthAdjust="spacingAndGlyphs" >8:03 PM</text>
<text x="1861" y="1075" font-size="15" fill="#f4f4f4" text-anchor="middle" textLength="68" lengthAdjust="spacingAndGlyphs" >1/25/2019</text>
<rect x="1906.5" y="1033.5" width="12" height="46" fill="#ffffff" fill-opacity="0.08" stroke="#ffffff" stroke-opacity="0.25"/></svg></body></html>
